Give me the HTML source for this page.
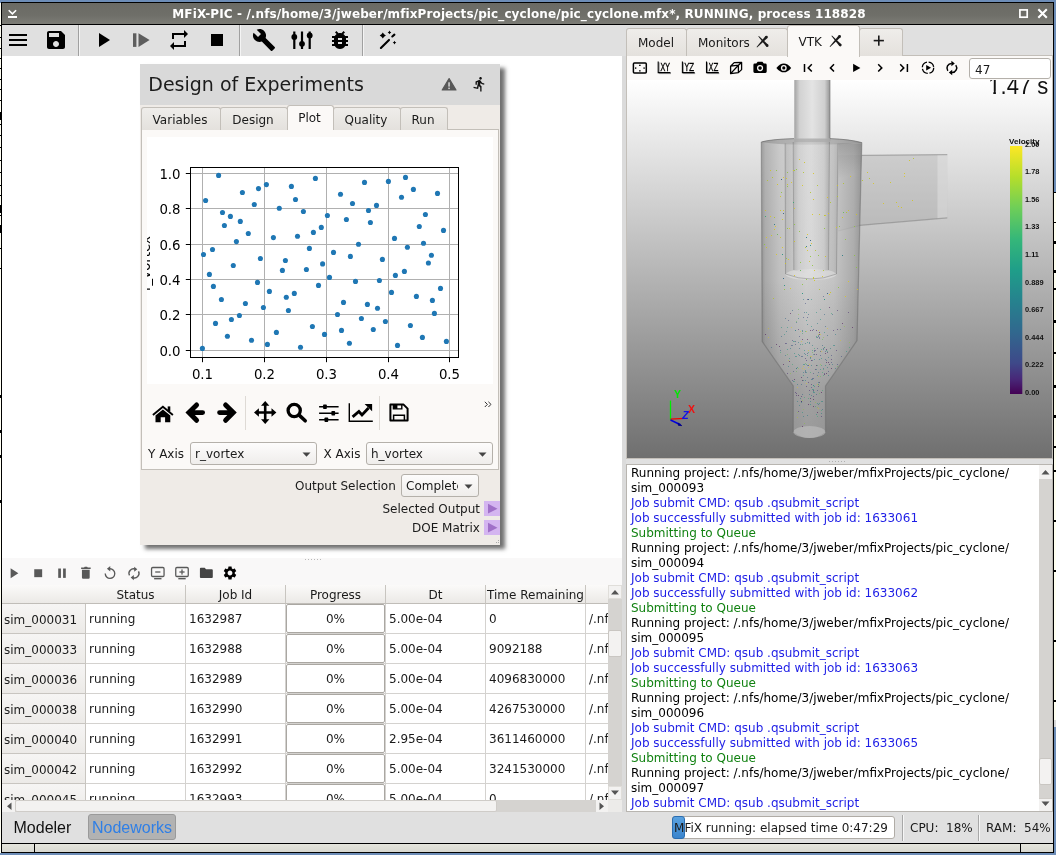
<!DOCTYPE html>
<html><head><meta charset="utf-8"><title>MFiX-PIC</title>
<style>
html,body{margin:0;padding:0;}
body{width:1056px;height:855px;overflow:hidden;background:#6d8db7;position:relative;
 font-family:"DejaVu Sans","Liberation Sans",sans-serif;font-size:12px;color:#1a1a1a;}
.a{position:absolute;}
.t{position:absolute;white-space:nowrap;line-height:1;}
svg{position:absolute;overflow:visible;}
#win{position:absolute;left:1px;top:2px;width:1053px;height:851px;background:#000;}
#in{position:absolute;left:1px;top:1px;width:1051px;height:849px;background:#e0e0e0;overflow:hidden;}
/* coordinates inside #in are page coords minus (2,3) ; use wrapper shifted */
#pg{position:absolute;left:-2px;top:-3px;width:1056px;height:855px;will-change:transform;}
.tab{position:absolute;box-sizing:border-box;border:1px solid #c3bfb9;border-bottom:none;border-radius:3px 3px 0 0;
 background:linear-gradient(#efedea,#e4e1dd);text-align:center;font-size:13px;}
.tab.sel{background:#fbf9f7;}
.hdr{position:absolute;box-sizing:border-box;top:585px;height:19px;background:linear-gradient(#fbfaf9,#ebe9e6);
 border-right:1px solid #c8c5c0;border-bottom:1px solid #c0bdb8;text-align:center;font-size:12px;line-height:20px;}
.rh{position:absolute;box-sizing:border-box;left:2px;width:84px;height:30px;background:linear-gradient(#f6f5f4,#eceae7);
 border-right:1px solid #c8c5c0;border-bottom:1px solid #c8c5c0;font-size:12px;line-height:33px;padding-left:2px;}
.cell{position:absolute;box-sizing:border-box;height:30px;background:#fff;border-right:1px solid #d4d2cf;border-bottom:1px solid #d4d2cf;
 font-size:12px;line-height:31px;padding-left:3px;white-space:nowrap;overflow:hidden;}
.pb{position:absolute;box-sizing:border-box;height:29px;background:#fff;border:1px solid #aaa7a2;border-radius:2px;text-align:center;font-size:12px;line-height:28px;}
.cl{position:absolute;left:631px;white-space:nowrap;font-size:12px;line-height:15px;height:15px;}
.k{color:#000;} .b{color:#1e1ee6;} .g{color:#128212;}
.combo{position:absolute;box-sizing:border-box;border:1px solid #b4b0aa;border-radius:3px;background:linear-gradient(#fdfcfc,#efedeb);font-size:13px;}
</style></head><body>
<!-- background slivers of windows behind -->
<div class="a" style="left:0;top:3px;width:1px;height:850px;background:#fffff4;"></div>
<div class="a" style="left:1054px;top:192px;width:2px;height:528px;background:#fffff0;"></div><div class="a" style="left:1054px;top:720px;width:2px;height:7px;background:#d8d8d8;"></div>
<div class="a" style="left:0;top:25px;width:1px;height:1px;background:#000;"></div><div class="a" style="left:0;top:37px;width:1px;height:1px;background:#000;"></div><div class="a" style="left:0;top:48px;width:1px;height:1px;background:#000;"></div><div class="a" style="left:0;top:58px;width:1px;height:1px;background:#000;"></div><div class="a" style="left:0;top:68px;width:1px;height:1px;background:#000;"></div><div class="a" style="left:0;top:79px;width:1px;height:1px;background:#000;"></div><div class="a" style="left:0;top:89px;width:1px;height:1px;background:#000;"></div><div class="a" style="left:0;top:100px;width:1px;height:1px;background:#000;"></div><div class="a" style="left:0;top:112px;width:1px;height:1px;background:#000;"></div><div class="a" style="left:0;top:124px;width:1px;height:1px;background:#000;"></div><div class="a" style="left:0;top:135px;width:1px;height:1px;background:#000;"></div><div class="a" style="left:0;top:147px;width:1px;height:1px;background:#000;"></div><div class="a" style="left:0;top:160px;width:1px;height:1px;background:#000;"></div><div class="a" style="left:0;top:172px;width:1px;height:1px;background:#000;"></div><div class="a" style="left:0;top:185px;width:1px;height:1px;background:#000;"></div><div class="a" style="left:0;top:195px;width:1px;height:1px;background:#000;"></div><div class="a" style="left:0;top:208px;width:1px;height:1px;background:#000;"></div><div class="a" style="left:0;top:215px;width:1px;height:1px;background:#000;"></div><div class="a" style="left:0;top:226px;width:1px;height:1px;background:#000;"></div><div class="a" style="left:0;top:248px;width:1px;height:1px;background:#000;"></div><div class="a" style="left:0;top:268px;width:1px;height:1px;background:#000;"></div><div class="a" style="left:0;top:112px;width:1px;height:8px;background:#000;"></div><div class="a" style="left:0;top:205px;width:1px;height:8px;background:#000;"></div><div class="a" style="left:0;top:225px;width:1px;height:8px;background:#000;"></div><div class="a" style="left:0;top:395px;width:1px;height:3px;background:#000;"></div><div class="a" style="left:0;top:430px;width:1px;height:3px;background:#000;"></div><div class="a" style="left:0;top:455px;width:1px;height:3px;background:#000;"></div><div class="a" style="left:0;top:500px;width:1px;height:3px;background:#000;"></div><div class="a" style="left:1054px;top:192px;width:2px;height:1px;background:#000;"></div><div class="a" style="left:1054px;top:222px;width:2px;height:1px;background:#000;"></div><div class="a" style="left:1054px;top:241px;width:2px;height:3px;background:#000;"></div><div class="a" style="left:1054px;top:270px;width:2px;height:3px;background:#000;"></div><div class="a" style="left:1054px;top:288px;width:2px;height:2px;background:#000;"></div><div class="a" style="left:1054px;top:320px;width:2px;height:3px;background:#000;"></div><div class="a" style="left:1054px;top:352px;width:2px;height:2px;background:#000;"></div><div class="a" style="left:1054px;top:385px;width:2px;height:3px;background:#000;"></div><div class="a" style="left:1054px;top:415px;width:2px;height:3px;background:#000;"></div><div class="a" style="left:1054px;top:446px;width:2px;height:2px;background:#000;"></div><div class="a" style="left:1054px;top:470px;width:2px;height:2px;background:#000;"></div><div class="a" style="left:1054px;top:520px;width:2px;height:2px;background:#000;"></div><div class="a" style="left:1054px;top:570px;width:2px;height:2px;background:#000;"></div><div class="a" style="left:1054px;top:640px;width:2px;height:2px;background:#000;"></div><div class="a" style="left:1054px;top:700px;width:2px;height:2px;background:#000;"></div><div id="win"><div id="in"><div id="pg"><div class="a" style="left:2px;top:3px;width:1051px;height:21px;background:linear-gradient(#6a6a64,#6f6f69 60%,#7c7c76);"></div>
<div class="a" style="left:2px;top:24px;width:1051px;height:1px;background:#000;"></div>
<div class="t" style="left:2px;width:1034px;top:8px;text-align:center;color:#fff;font-weight:bold;font-size:12px;letter-spacing:0.105px;">MFiX-PIC - /.nfs/home/3/jweber/mfixProjects/pic_cyclone/pic_cyclone.mfx*, RUNNING, process 118828</div>
<svg style="left:0;top:0" width="1056" height="30" viewBox="0 0 1056 30">
 <path d="M8.7 10.2 L12.4 13.9 L16.1 10.2" fill="none" stroke="#fff" stroke-width="1.6"/>
 <rect x="8" y="16" width="9" height="2" fill="#fff"/>
 <rect x="1019.9" y="9.9" width="7.3" height="7.3" fill="none" stroke="#fff" stroke-width="1.7"/>
 <path d="M1038.3 9.3 L1046.8 17.7 M1046.8 9.3 L1038.3 17.7" stroke="#fff" stroke-width="2.1" fill="none"/>
</svg>
<div class="a" style="left:2px;top:25px;width:1051px;height:31px;background:#e0e0e0;"></div>
<div class="a" style="left:78px;top:25px;width:1px;height:31px;background:#a0a0a0;"></div><div class="a" style="left:79px;top:25px;width:1px;height:31px;background:#f4f4f4;"></div>
<div class="a" style="left:239px;top:25px;width:1px;height:31px;background:#a0a0a0;"></div><div class="a" style="left:240px;top:25px;width:1px;height:31px;background:#f4f4f4;"></div>
<div class="a" style="left:362px;top:25px;width:1px;height:31px;background:#a0a0a0;"></div><div class="a" style="left:363px;top:25px;width:1px;height:31px;background:#f4f4f4;"></div>
<svg style="left:6px;top:28px" width="24" height="24" viewBox="0 0 24 24"><path d="M3 18h18v-2H3v2zm0-5h18v-2H3v2zm0-7v2h18V6H3z" fill="#000" /></svg><svg style="left:44px;top:28px" width="24" height="24" viewBox="0 0 24 24"><path d="M17 3H5c-1.11 0-2 .9-2 2v14c0 1.1.89 2 2 2h14c1.1 0 2-.9 2-2V7l-4-4zm-5 16c-1.66 0-3-1.34-3-3s1.34-3 3-3 3 1.34 3 3-1.34 3-3 3zm3-10H5V5h10v4z" fill="#000" /></svg><svg style="left:91px;top:28px" width="24" height="24" viewBox="0 0 24 24"><path d="M8 5v14l11-7z" fill="#000" /></svg><svg style="left:0;top:0" width="300" height="60"><rect x="133" y="33.3" width="3.4" height="13.6" fill="#5e5e5e"/><path d="M138.5 33.3 L149.6 40.1 L138.5 46.9Z" fill="#5e5e5e"/></svg><svg style="left:167px;top:28px" width="24" height="24" viewBox="0 0 24 24"><path d="M7 7h10v3l4-4-4-4v3H5v6h2V7zm10 10H7v-3l-4 4 4 4v-3h12v-6h-2v4z" fill="#000" /></svg><svg style="left:205px;top:28px" width="24" height="24" viewBox="0 0 24 24"><path d="M6 6h12v12H6z" fill="#000" /></svg><svg style="left:252px;top:28px" width="24" height="24" viewBox="0 0 24 24"><path d="M22.7 19l-9.1-9.1c.9-2.3.4-5-1.5-6.9-2-2-5-2.4-7.4-1.3L9 6 6 9 1.6 4.7C.4 7.1.9 10.1 2.9 12.1c1.9 1.9 4.6 2.4 6.9 1.5l9.1 9.1c.4.4 1 .4 1.4 0l2.3-2.3c.5-.4.5-1.1.1-1.4z" fill="#000" /></svg><svg style="left:0;top:0" width="400" height="60"><g stroke="#000" stroke-width="2.2" fill="none">
<path d="M294.3 31.5V49 M302 31.5V49 M309.7 31.5V49"/></g>
<circle cx="294.3" cy="37" r="2.9" fill="#000"/><circle cx="302" cy="43.8" r="2.9" fill="#000"/><circle cx="309.7" cy="35.4" r="2.9" fill="#000"/></svg><svg style="left:328px;top:28px" width="24" height="24" viewBox="0 0 24 24"><path d="M20 8h-2.81c-.45-.78-1.07-1.45-1.82-1.96L17 4.41 15.59 3l-2.17 2.17C12.96 5.06 12.49 5 12 5c-.49 0-.96.06-1.41.17L8.41 3 7 4.41l1.62 1.63C7.88 6.55 7.26 7.22 6.81 8H4v2h2.09c-.05.33-.09.66-.09 1v1H4v2h2v1c0 .34.04.67.09 1H4v2h2.81c1.04 1.79 2.97 3 5.19 3s4.15-1.21 5.19-3H20v-2h-2.09c.05-.33.09-.66.09-1v-1h2v-2h-2v-1c0-.34-.04-.67-.09-1H20V8zm-6 8h-4v-2h4v2zm0-4h-4v-2h4v2z" fill="#000" /></svg><svg style="left:0;top:0" width="420" height="60"><path d="M380.900 48 L389 39.900 M392.300 36.500 L394.400 34.600" stroke="#000" stroke-width="2.100" stroke-linecap="round" fill="none"/><path d="M382.8 32.4 Q383.885 34.415 385.9 35.5 Q383.885 36.585 382.8 38.6 Q381.715 36.585 379.7 35.5 Q381.715 34.415 382.8 32.4Z M389.5 30.6 Q389.95 31.95 391.3 32.4 Q389.95 32.85 389.5 34.2 Q389.05 32.85 387.7 32.4 Q389.05 31.95 389.5 30.6Z M394.5 40.8 Q394.95 42.15 396.3 42.6 Q394.95 43.05 394.5 44.4 Q394.05 43.05 392.7 42.6 Q394.05 42.15 394.5 40.8Z" fill="#000"/></svg><div class="a" style="left:2px;top:56px;width:620px;height:502px;background:#fff;"></div><div class="a" style="left:2px;top:558px;width:620px;height:254px;background:#f9f8f8;"></div><div class="a" style="left:622px;top:56px;width:4px;height:756px;background:#dbdbdb;"></div><div class="a" style="left:140px;top:64px;width:360px;height:481px;background:#efebe7;box-shadow:5px 4px 4px 0 rgba(40,40,40,.66);"></div>
<div class="a" style="left:140px;top:64px;width:360px;height:41px;background:#d9d9d9;"></div>
<div class="t" style="left:148.300px;top:75px;font-size:19px;color:#1c1c1c;">Design of Experiments</div>
<svg style="left:0;top:0" width="520" height="120">
 <path d="M449.100 78.600 L456 90 H442.200 Z" fill="#585858" stroke="#585858" stroke-width="1.200" stroke-linejoin="round"/>
 <rect x="448.3" y="82.3" width="1.5" height="4.3" fill="#d9d9d9"/><rect x="448.3" y="87.6" width="1.5" height="1.5" fill="#d9d9d9"/>
 <g transform="translate(471.5,76) scale(0.67)"><path d="M13.49 5.48c1.1 0 2-.9 2-2s-.9-2-2-2-2 .9-2 2 .9 2 2 2zm-3.6 13.9l1-4.4 2.1 2v6h2v-7.5l-2.1-2 .6-3c1.3 1.5 3.3 2.5 5.5 2.5v-2c-1.9 0-3.5-1-4.3-2.400l-1-1.6c-.4-.6-1-1-1.700-1-.3 0-.5.1-.8.1l-5.200 2.200v4.700h2v-3.400l1.800-.7-1.600 8.100-4.900-1-.4 2 7 1.400z" fill="#111"/></g>
</svg>
<div class="a" style="left:141px;top:129px;width:358px;height:341px;box-sizing:border-box;border:1px solid #c3bfb9;background:#fbf9f7;"></div><div class="tab" style="left:141px;top:107px;width:80px;height:23px;line-height:24px;font-size:12px;text-indent:-2px;">Variables</div><div class="tab" style="left:220px;top:107px;width:68px;height:23px;line-height:24px;font-size:12px;text-indent:-2px;">Design</div><div class="tab" style="left:333px;top:107px;width:68px;height:23px;line-height:24px;font-size:12px;text-indent:-2px;">Quality</div><div class="tab" style="left:400px;top:107px;width:48px;height:23px;line-height:24px;font-size:12px;text-indent:-2px;">Run</div><div class="tab sel" style="left:287px;top:105px;width:47px;height:25px;line-height:25px;font-size:12px;text-indent:-2px;">Plot</div><div class="a" style="left:147px;top:137px;width:346px;height:247px;background:#fff;overflow:hidden;"><svg style="left:-147px;top:-137px" width="520" height="420" font-family="DejaVu Sans, sans-serif" font-size="13.33px" fill="#000"><path d="M202.5 167.5V357.5" stroke="#b0b0b0" stroke-width="1"/><path d="M202.5 357.5v4.7" stroke="#000" stroke-width="1"/><path d="M264.5 167.5V357.5" stroke="#b0b0b0" stroke-width="1"/><path d="M264.5 357.5v4.7" stroke="#000" stroke-width="1"/><path d="M326.5 167.5V357.5" stroke="#b0b0b0" stroke-width="1"/><path d="M326.5 357.5v4.7" stroke="#000" stroke-width="1"/><path d="M388.5 167.5V357.5" stroke="#b0b0b0" stroke-width="1"/><path d="M388.5 357.5v4.7" stroke="#000" stroke-width="1"/><path d="M449.5 167.5V357.5" stroke="#b0b0b0" stroke-width="1"/><path d="M449.5 357.5v4.7" stroke="#000" stroke-width="1"/><path d="M190.5 350.5H458.5" stroke="#b0b0b0" stroke-width="1"/><path d="M190.5 350.5h-4.7" stroke="#000" stroke-width="1"/><path d="M190.5 314.5H458.5" stroke="#b0b0b0" stroke-width="1"/><path d="M190.5 314.5h-4.7" stroke="#000" stroke-width="1"/><path d="M190.5 279.5H458.5" stroke="#b0b0b0" stroke-width="1"/><path d="M190.5 279.5h-4.7" stroke="#000" stroke-width="1"/><path d="M190.5 244.5H458.5" stroke="#b0b0b0" stroke-width="1"/><path d="M190.5 244.5h-4.7" stroke="#000" stroke-width="1"/><path d="M190.5 208.5H458.5" stroke="#b0b0b0" stroke-width="1"/><path d="M190.5 208.5h-4.7" stroke="#000" stroke-width="1"/><path d="M190.5 173.5H458.5" stroke="#b0b0b0" stroke-width="1"/><path d="M190.5 173.5h-4.7" stroke="#000" stroke-width="1"/><circle cx="218.6" cy="175.4" r="2.55" fill="#1f77b4"/><circle cx="205.6" cy="200.5" r="2.55" fill="#1f77b4"/><circle cx="242.4" cy="192.5" r="2.55" fill="#1f77b4"/><circle cx="258.5" cy="188.6" r="2.55" fill="#1f77b4"/><circle cx="266.4" cy="184.6" r="2.55" fill="#1f77b4"/><circle cx="254.3" cy="204.5" r="2.55" fill="#1f77b4"/><circle cx="291.4" cy="186.4" r="2.55" fill="#1f77b4"/><circle cx="315.4" cy="178.4" r="2.55" fill="#1f77b4"/><circle cx="295.5" cy="199.5" r="2.55" fill="#1f77b4"/><circle cx="279.3" cy="208.3" r="2.55" fill="#1f77b4"/><circle cx="303.4" cy="211.5" r="2.55" fill="#1f77b4"/><circle cx="327.4" cy="215.5" r="2.55" fill="#1f77b4"/><circle cx="222.5" cy="212.5" r="2.55" fill="#1f77b4"/><circle cx="230.4" cy="216.4" r="2.55" fill="#1f77b4"/><circle cx="240.3" cy="221.4" r="2.55" fill="#1f77b4"/><circle cx="224.4" cy="225.5" r="2.55" fill="#1f77b4"/><circle cx="248.3" cy="233.5" r="2.55" fill="#1f77b4"/><circle cx="236.4" cy="241.6" r="2.55" fill="#1f77b4"/><circle cx="273.4" cy="237.6" r="2.55" fill="#1f77b4"/><circle cx="297.5" cy="236.3" r="2.55" fill="#1f77b4"/><circle cx="313.4" cy="232.4" r="2.55" fill="#1f77b4"/><circle cx="321.3" cy="227.4" r="2.55" fill="#1f77b4"/><circle cx="212.5" cy="249.5" r="2.55" fill="#1f77b4"/><circle cx="203.5" cy="254.5" r="2.55" fill="#1f77b4"/><circle cx="309.4" cy="248.4" r="2.55" fill="#1f77b4"/><circle cx="260.4" cy="258.5" r="2.55" fill="#1f77b4"/><circle cx="285.4" cy="260.5" r="2.55" fill="#1f77b4"/><circle cx="322.6" cy="263.9" r="2.55" fill="#1f77b4"/><circle cx="233.3" cy="265.5" r="2.55" fill="#1f77b4"/><circle cx="364.5" cy="182.4" r="2.55" fill="#1f77b4"/><circle cx="388.4" cy="181.4" r="2.55" fill="#1f77b4"/><circle cx="405.5" cy="177.4" r="2.55" fill="#1f77b4"/><circle cx="413.4" cy="189.4" r="2.55" fill="#1f77b4"/><circle cx="437.5" cy="193.4" r="2.55" fill="#1f77b4"/><circle cx="401.5" cy="197.3" r="2.55" fill="#1f77b4"/><circle cx="340.5" cy="194.3" r="2.55" fill="#1f77b4"/><circle cx="352.5" cy="203.5" r="2.55" fill="#1f77b4"/><circle cx="376.5" cy="205.4" r="2.55" fill="#1f77b4"/><circle cx="368.5" cy="210.5" r="2.55" fill="#1f77b4"/><circle cx="346.4" cy="219.5" r="2.55" fill="#1f77b4"/><circle cx="370.4" cy="222.5" r="2.55" fill="#1f77b4"/><circle cx="425.4" cy="214.5" r="2.55" fill="#1f77b4"/><circle cx="419.3" cy="226.5" r="2.55" fill="#1f77b4"/><circle cx="443.5" cy="230.4" r="2.55" fill="#1f77b4"/><circle cx="394.5" cy="238.4" r="2.55" fill="#1f77b4"/><circle cx="358.5" cy="244.3" r="2.55" fill="#1f77b4"/><circle cx="423.5" cy="243.3" r="2.55" fill="#1f77b4"/><circle cx="407.4" cy="247.3" r="2.55" fill="#1f77b4"/><circle cx="333.5" cy="252.4" r="2.55" fill="#1f77b4"/><circle cx="350.4" cy="256.4" r="2.55" fill="#1f77b4"/><circle cx="382.4" cy="259.4" r="2.55" fill="#1f77b4"/><circle cx="431.4" cy="255.3" r="2.55" fill="#1f77b4"/><circle cx="428.4" cy="263.0" r="2.55" fill="#1f77b4"/><circle cx="209.4" cy="274.4" r="2.55" fill="#1f77b4"/><circle cx="282.4" cy="270.4" r="2.55" fill="#1f77b4"/><circle cx="306.4" cy="269.5" r="2.55" fill="#1f77b4"/><circle cx="329.5" cy="277.4" r="2.55" fill="#1f77b4"/><circle cx="213.4" cy="286.4" r="2.55" fill="#1f77b4"/><circle cx="257.5" cy="282.4" r="2.55" fill="#1f77b4"/><circle cx="318.5" cy="285.4" r="2.55" fill="#1f77b4"/><circle cx="269.4" cy="291.4" r="2.55" fill="#1f77b4"/><circle cx="294.3" cy="293.4" r="2.55" fill="#1f77b4"/><circle cx="286.3" cy="297.3" r="2.55" fill="#1f77b4"/><circle cx="221.4" cy="299.5" r="2.55" fill="#1f77b4"/><circle cx="245.4" cy="303.5" r="2.55" fill="#1f77b4"/><circle cx="263.4" cy="307.5" r="2.55" fill="#1f77b4"/><circle cx="288.4" cy="310.5" r="2.55" fill="#1f77b4"/><circle cx="239.4" cy="315.5" r="2.55" fill="#1f77b4"/><circle cx="231.4" cy="319.5" r="2.55" fill="#1f77b4"/><circle cx="215.5" cy="323.4" r="2.55" fill="#1f77b4"/><circle cx="312.4" cy="326.5" r="2.55" fill="#1f77b4"/><circle cx="276.4" cy="332.4" r="2.55" fill="#1f77b4"/><circle cx="324.5" cy="334.4" r="2.55" fill="#1f77b4"/><circle cx="227.4" cy="336.3" r="2.55" fill="#1f77b4"/><circle cx="251.5" cy="340.3" r="2.55" fill="#1f77b4"/><circle cx="267.4" cy="344.4" r="2.55" fill="#1f77b4"/><circle cx="300.5" cy="347.3" r="2.55" fill="#1f77b4"/><circle cx="202.4" cy="348.4" r="2.55" fill="#1f77b4"/><circle cx="395.4" cy="275.4" r="2.55" fill="#1f77b4"/><circle cx="404.4" cy="271.4" r="2.55" fill="#1f77b4"/><circle cx="355.5" cy="281.4" r="2.55" fill="#1f77b4"/><circle cx="379.4" cy="280.5" r="2.55" fill="#1f77b4"/><circle cx="440.5" cy="288.4" r="2.55" fill="#1f77b4"/><circle cx="391.5" cy="292.4" r="2.55" fill="#1f77b4"/><circle cx="416.4" cy="296.4" r="2.55" fill="#1f77b4"/><circle cx="432.4" cy="300.4" r="2.55" fill="#1f77b4"/><circle cx="343.5" cy="302.4" r="2.55" fill="#1f77b4"/><circle cx="367.4" cy="304.4" r="2.55" fill="#1f77b4"/><circle cx="377.5" cy="308.3" r="2.55" fill="#1f77b4"/><circle cx="434.4" cy="313.4" r="2.55" fill="#1f77b4"/><circle cx="337.5" cy="314.5" r="2.55" fill="#1f77b4"/><circle cx="361.4" cy="318.5" r="2.55" fill="#1f77b4"/><circle cx="385.4" cy="321.5" r="2.55" fill="#1f77b4"/><circle cx="410.4" cy="325.5" r="2.55" fill="#1f77b4"/><circle cx="341.5" cy="330.4" r="2.55" fill="#1f77b4"/><circle cx="373.3" cy="329.5" r="2.55" fill="#1f77b4"/><circle cx="422.4" cy="337.4" r="2.55" fill="#1f77b4"/><circle cx="349.4" cy="343.3" r="2.55" fill="#1f77b4"/><circle cx="446.4" cy="341.4" r="2.55" fill="#1f77b4"/><circle cx="397.5" cy="345.4" r="2.55" fill="#1f77b4"/><rect x="190.5" y="167.5" width="268" height="190" fill="none" stroke="#000" stroke-width="1"/><text x="202.5" y="378.6" text-anchor="middle">0.1</text><text x="264.5" y="378.6" text-anchor="middle">0.2</text><text x="326.5" y="378.6" text-anchor="middle">0.3</text><text x="388.5" y="378.6" text-anchor="middle">0.4</text><text x="449.5" y="378.6" text-anchor="middle">0.5</text><text x="180.600" y="355.5" text-anchor="end">0.0</text><text x="180.600" y="319.5" text-anchor="end">0.2</text><text x="180.600" y="284.5" text-anchor="end">0.4</text><text x="180.600" y="249.5" text-anchor="end">0.6</text><text x="180.600" y="213.5" text-anchor="end">0.8</text><text x="180.600" y="178.5" text-anchor="end">1.0</text><text transform="translate(149.500,263.500) rotate(-90)" text-anchor="middle">r_vortex</text></svg></div><svg style="left:0;top:0" width="520" height="440">
<g fill="#000" stroke="none">
 <!-- home -->
 <path d="M162.900 405.600 L173.500 414.300 L172.300 415.700 L162.900 408 L153.500 415.700 L152.300 414.300 Z"/>
 <path d="M162.900 409.400 L170.300 415.500 V422.300 H165.100 V417.200 H160.700 V422.300 H155.500 V415.500 Z"/>
 <rect x="167.700" y="406.400" width="2.600" height="5"/>
</g>
<g fill="none" stroke="#000" stroke-width="4.900" stroke-linecap="round" stroke-linejoin="miter">
 <!-- back -->
 <path d="M202.600 412.600 H190.500 M196.600 404.900 L188.900 412.600 L196.600 420.300"/>
 <!-- forward -->
 <path d="M219.600 412.600 H231.700 M225.600 404.900 L233.300 412.600 L225.600 420.300"/>
</g>
<g fill="#000">
 <!-- move -->
 <path d="M265.200 401 L269.400 405.800 H266.500 V411.200 H271.500 V408.300 L276.400 412.500 L271.500 416.700 V413.800 H266.500 V419.200 H269.400 L265.200 424 L261 419.200 H263.900 V413.800 H258.900 V416.700 L254 412.500 L258.900 408.300 V411.200 H263.900 V405.800 H261 Z"/>
</g>
 <!-- zoom -->
 <circle cx="294.200" cy="410.500" r="6.100" fill="none" stroke="#000" stroke-width="3.300"/>
 <path d="M299.400 415.400 L305.200 420.800" stroke="#000" stroke-width="3.600" stroke-linecap="round"/>
 <!-- subplots -->
 <g stroke="#000" stroke-width="1.600"><path d="M319.100 406.700H338.600 M319.100 413.300H338.600 M319.100 419.700H338.600"/></g>
 <rect x="323.100" y="404.500" width="3.700" height="4.400" rx="0.700" fill="#000"/><rect x="331.400" y="411.100" width="3.700" height="4.400" rx="0.700" fill="#000"/><rect x="324.500" y="417.500" width="3.700" height="4.400" rx="0.700" fill="#000"/>
 <!-- edit (chart) -->
 <path d="M349.300 403.200 V421.300 H372.800" fill="none" stroke="#000" stroke-width="1.400"/>
 <path d="M352.600 416.800 L358.900 411.500 L362 414.900 L368.500 408.100" fill="none" stroke="#000" stroke-width="2.900" stroke-linejoin="miter"/>
 <path d="M364.600 404.100 H372.100 V411.200 Z" fill="#000"/>
 <!-- save -->
 <path d="M390.400 404.600 H403.600 L407.600 408.600 V420.500 H390.400 Z" fill="none" stroke="#000" stroke-width="2" stroke-linejoin="round"/>
 <path d="M393.400 404.600 V408.900 H401.800 V404.600" fill="none" stroke="#000" stroke-width="1.400"/>
 <rect x="393" y="404" width="4.400" height="4.900" fill="#000"/>
 <path d="M393.600 420.500 V415.200 H404.400 V420.500" fill="none" stroke="#000" stroke-width="1.500"/>
 <!-- separators -->
 <path d="M245.500 396V430 M379.500 396V430" stroke="#dedad5" stroke-width="1"/>
 <path d="M484.800 401.800 l2.600 2.600 l-2.600 2.600 M488.400 401.800 l2.600 2.600 l-2.600 2.600" fill="none" stroke="#333" stroke-width="1"/>
</svg>
<div class="t" style="left:148px;top:448px;font-size:12px;">Y Axis</div><div class="combo" style="left:190px;top:442px;width:127px;height:23px;line-height:23px;font-size:12px;padding-left:4px;overflow:hidden;">r_vortex</div><svg style="left:302px;top:451.5px" width="10" height="6"><path d="M0.500 0.500 H8.500 L4.500 4.800Z" fill="#444"/></svg><div class="t" style="left:323.500px;top:448px;font-size:12px;">X Axis</div><div class="combo" style="left:366px;top:442px;width:127px;height:23px;line-height:23px;font-size:12px;padding-left:4px;overflow:hidden;">h_vortex</div><svg style="left:478px;top:451.5px" width="10" height="6"><path d="M0.500 0.500 H8.500 L4.500 4.800Z" fill="#444"/></svg><div class="t" style="left:295px;top:480px;font-size:12px;">Output Selection</div><div class="combo" style="left:401px;top:474px;width:78px;height:23px;line-height:23px;font-size:12px;padding-left:4px;overflow:hidden;"><span style="display:inline-block;width:52px;overflow:hidden;vertical-align:top;">Completed</span></div><svg style="left:464px;top:483.5px" width="10" height="6"><path d="M0.500 0.500 H8.500 L4.500 4.800Z" fill="#444"/></svg><div class="t" style="left:382.500px;top:503px;font-size:12px;">Selected Output</div><div class="t" style="left:412px;top:522px;font-size:12px;">DOE Matrix</div><div class="a" style="left:484px;top:501px;width:16px;height:15px;background:#d4b5f0;"></div><svg style="left:487px;top:503px" width="12" height="12"><path d="M1 0.800 L10.500 5.700 L1 10.600Z" fill="#a070c8"/></svg><div class="a" style="left:484px;top:520px;width:16px;height:15px;background:#d4b5f0;"></div><svg style="left:487px;top:522px" width="12" height="12"><path d="M1 0.800 L10.500 5.700 L1 10.600Z" fill="#a070c8"/></svg><svg style="left:490px;top:536px" width="10" height="10"><g fill="#aaa"><rect x="6" y="6" width="1" height="1"/><rect x="8" y="4" width="1" height="1"/><rect x="8" y="6" width="1" height="1"/></g></svg><svg style="left:305px;top:558px" width="20" height="4"><g fill="#b8b8b8"><rect x="0" y="1" width="1" height="1"/><rect x="3" y="1" width="1" height="1"/><rect x="6" y="1" width="1" height="1"/><rect x="9" y="1" width="1" height="1"/><rect x="12" y="1" width="1" height="1"/><rect x="15" y="1" width="1" height="1"/></g></svg><svg style="left:0;top:0" width="260" height="600"><g transform="translate(14.3,573.200) scale(0.900) translate(-14.3,-573.200)"><path d="M10.200 567.600 L18.800 573.200 L10.200 578.800Z" fill="#595959"/></g><g transform="translate(38.2,573.200) scale(0.900) translate(-38.2,-573.200)"><rect x="33.800" y="568.800" width="8.800" height="8.800" fill="#595959"/></g><g transform="translate(62,573.200) scale(0.900) translate(-62,-573.200)"><rect x="57.800" y="568" width="3" height="10.400" fill="#595959"/><rect x="63.200" y="568" width="3" height="10.400" fill="#595959"/></g><g transform="translate(85.9,573.200) scale(0.900) translate(-85.9,-573.200)"><path d="M81.500 569.500 h8.600 v8.600 q0 1.300 -1.300 1.300 h-6 q-1.300 0 -1.300 -1.300 Z M80.600 567 h3.200 l0.800 -0.900 h2.600 l0.800 0.900 h3.200 v1.600 h-10.600 Z" fill="#595959"/></g><g transform="translate(110,573.200) scale(0.900) translate(-110,-573.200)"><path d="M110 568.300 a5.300 5.300 0 1 1 -5.300 5.300" fill="none" stroke="#595959" stroke-width="1.500"/><path d="M110.300 565.300 L106.600 568.300 L110.300 571.300Z" fill="#595959"/></g><g transform="translate(134,573.200) scale(0.900) translate(-134,-573.200)"><g fill="none" stroke="#595959" stroke-width="1.500"><path d="M129 575.600 a5 5 0 0 1 6.600 -6.800"/><path d="M139 571.200 a5 5 0 0 1 -6.600 6.800"/></g><path d="M134.200 565.900 L137.700 568.800 L134.200 571.700Z" fill="#595959"/><path d="M133.800 575.100 L130.300 578 L133.800 580.900Z" fill="#595959"/></g><g transform="translate(157.8,573.200) scale(0.920) translate(-157.8,-573.200)"><rect x="151" y="567" width="13.600" height="9.800" rx="1.300" fill="none" stroke="#595959" stroke-width="1.400"/><rect x="153.8" y="578.400" width="8" height="1.500" fill="#595959"/><rect x="155" y="571.200" width="5.600" height="1.400" fill="#595959"/></g><g transform="translate(182,573.200) scale(0.920) translate(-182,-573.200)"><rect x="175.2" y="567" width="13.600" height="9.800" rx="1.300" fill="none" stroke="#595959" stroke-width="1.400"/><rect x="178" y="578.400" width="8" height="1.500" fill="#595959"/><rect x="179.2" y="571.200" width="5.600" height="1.400" fill="#595959"/><rect x="181.3" y="569.100" width="1.400" height="5.600" fill="#595959"/></g><g transform="translate(206.4,573.200) scale(0.900) translate(-206.4,-573.200)"><path d="M200.200 567.200 h4.300 l1.500 1.700 h6.500 q1 0 1 1 v7.600 q0 1 -1 1 h-12.300 q-1 0 -1 -1 v-9.300 q0 -1 1 -1Z" fill="#444"/></g></svg><svg style="left:221.500px;top:565px" width="16" height="16" viewBox="0 0 24 24"><path d="M19.140 12.940c.04-.3.060-.61.060-.94 0-.32-.02-.64-.07-.94l2.030-1.580c.18-.14.230-.41.120-.61l-1.920-3.320c-.12-.22-.37-.29-.59-.22l-2.390.96c-.5-.38-1.030-.7-1.620-.94l-.36-2.540c-.04-.24-.24-.41-.48-.41h-3.840c-.24 0-.43.170-.47.410l-.36 2.540c-.59.240-1.130.57-1.620.94l-2.390-.96c-.22-.08-.47 0-.59.220L2.740 8.870c-.12.210-.08.470.12.610l2.030 1.580c-.05.300-.09.630-.09.940s.02.640.07.940l-2.030 1.580c-.18.140-.23.410-.12.610l1.920 3.320c.12.220.37.290.59.220l2.390-.96c.5.380 1.030.7 1.620.94l.36 2.540c.05.240.24.410.48.410h3.840c.24 0 .44-.17.470-.41l.36-2.540c.59-.24 1.130-.56 1.620-.94l2.390.96c.22.080.47 0 .59-.22l1.920-3.320c.12-.22.070-.47-.12-.61l-2.010-1.580zM12 15.600c-1.980 0-3.600-1.620-3.600-3.600s1.620-3.600 3.600-3.600 3.600 1.620 3.600 3.600-1.620 3.600-3.600 3.600z" fill="#000"/></svg><div class="a" style="left:2px;top:585px;width:620px;height:227px;background:#fff;overflow:hidden;"></div><div class="a" style="left:2px;top:585px;width:606px;height:215px;overflow:hidden;"><div class="a" style="left:-2px;top:-585px;"><div class="hdr" style="left:2px;width:84px;border-right:none;"></div><div class="hdr" style="left:86px;width:100px;">Status</div><div class="hdr" style="left:186px;width:100px;">Job Id</div><div class="hdr" style="left:286px;width:100px;">Progress</div><div class="hdr" style="left:386px;width:100px;">Dt</div><div class="hdr" style="left:486px;width:100px;">Time Remaining</div><div class="hdr" style="left:586px;width:23px;border-right:none;"></div><div class="rh" style="top:604px;">sim_000031</div><div class="cell" style="left:86px;width:100px;top:604px;">running</div><div class="cell" style="left:186px;width:100px;top:604px;">1632987</div><div class="cell" style="left:286px;width:100px;top:604px;"></div><div class="pb" style="left:286px;width:99px;top:604px;">0%</div><div class="cell" style="left:386px;width:100px;top:604px;">5.00e-04</div><div class="cell" style="left:486px;width:100px;top:604px;">0</div><div class="cell" style="left:586px;width:40px;top:604px;border-right:none;">/.nfs</div><div class="rh" style="top:634px;">sim_000033</div><div class="cell" style="left:86px;width:100px;top:634px;">running</div><div class="cell" style="left:186px;width:100px;top:634px;">1632988</div><div class="cell" style="left:286px;width:100px;top:634px;"></div><div class="pb" style="left:286px;width:99px;top:634px;">0%</div><div class="cell" style="left:386px;width:100px;top:634px;">5.00e-04</div><div class="cell" style="left:486px;width:100px;top:634px;">9092188</div><div class="cell" style="left:586px;width:40px;top:634px;border-right:none;">/.nfs</div><div class="rh" style="top:664px;">sim_000036</div><div class="cell" style="left:86px;width:100px;top:664px;">running</div><div class="cell" style="left:186px;width:100px;top:664px;">1632989</div><div class="cell" style="left:286px;width:100px;top:664px;"></div><div class="pb" style="left:286px;width:99px;top:664px;">0%</div><div class="cell" style="left:386px;width:100px;top:664px;">5.00e-04</div><div class="cell" style="left:486px;width:100px;top:664px;">4096830000</div><div class="cell" style="left:586px;width:40px;top:664px;border-right:none;">/.nfs</div><div class="rh" style="top:694px;">sim_000038</div><div class="cell" style="left:86px;width:100px;top:694px;">running</div><div class="cell" style="left:186px;width:100px;top:694px;">1632990</div><div class="cell" style="left:286px;width:100px;top:694px;"></div><div class="pb" style="left:286px;width:99px;top:694px;">0%</div><div class="cell" style="left:386px;width:100px;top:694px;">5.00e-04</div><div class="cell" style="left:486px;width:100px;top:694px;">4267530000</div><div class="cell" style="left:586px;width:40px;top:694px;border-right:none;">/.nfs</div><div class="rh" style="top:724px;">sim_000040</div><div class="cell" style="left:86px;width:100px;top:724px;">running</div><div class="cell" style="left:186px;width:100px;top:724px;">1632991</div><div class="cell" style="left:286px;width:100px;top:724px;"></div><div class="pb" style="left:286px;width:99px;top:724px;">0%</div><div class="cell" style="left:386px;width:100px;top:724px;">2.95e-04</div><div class="cell" style="left:486px;width:100px;top:724px;">3611460000</div><div class="cell" style="left:586px;width:40px;top:724px;border-right:none;">/.nfs</div><div class="rh" style="top:754px;">sim_000042</div><div class="cell" style="left:86px;width:100px;top:754px;">running</div><div class="cell" style="left:186px;width:100px;top:754px;">1632992</div><div class="cell" style="left:286px;width:100px;top:754px;"></div><div class="pb" style="left:286px;width:99px;top:754px;">0%</div><div class="cell" style="left:386px;width:100px;top:754px;">5.00e-04</div><div class="cell" style="left:486px;width:100px;top:754px;">3241530000</div><div class="cell" style="left:586px;width:40px;top:754px;border-right:none;">/.nfs</div><div class="rh" style="top:784px;">sim_000045</div><div class="cell" style="left:86px;width:100px;top:784px;">running</div><div class="cell" style="left:186px;width:100px;top:784px;">1632993</div><div class="cell" style="left:286px;width:100px;top:784px;"></div><div class="pb" style="left:286px;width:99px;top:784px;">0%</div><div class="cell" style="left:386px;width:100px;top:784px;">5.00e-04</div><div class="cell" style="left:486px;width:100px;top:784px;">0</div><div class="cell" style="left:586px;width:40px;top:784px;border-right:none;">/.nfs</div></div></div><div class="a" style="left:608px;top:585px;width:14px;height:215px;background:#d5d3d0;"></div>
<div class="a" style="left:608px;top:585px;width:14px;height:14px;background:#f3f2f1;box-sizing:border-box;border:1px solid #e0deda;"></div>
<div class="a" style="left:608px;top:786px;width:14px;height:14px;background:#f3f2f1;box-sizing:border-box;border:1px solid #e0deda;"></div>
<div class="a" style="left:608px;top:630px;width:14px;height:27px;background:#f3f2f1;box-sizing:border-box;border:1px solid #c9c6c2;border-radius:2px;"></div>
<svg style="left:608px;top:585px" width="14" height="215"><path d="M3 9.500 L7 5 L11 9.500Z M3 205.500 L7 210 L11 205.500Z" fill="#555"/></svg>
<div class="a" style="left:2px;top:800px;width:606px;height:12px;background:#d5d3d0;"></div>
<div class="a" style="left:608px;top:800px;width:14px;height:12px;background:#ecebe9;"></div>
<div class="a" style="left:2px;top:800px;width:13px;height:12px;background:#f3f2f1;"></div>
<div class="a" style="left:596px;top:800px;width:12px;height:12px;background:#f3f2f1;"></div>
<div class="a" style="left:15px;top:800px;width:482px;height:12px;background:#f3f2f1;box-sizing:border-box;border:1px solid #cfccc8;border-radius:2px;"></div>
<svg style="left:2px;top:800px" width="606" height="12"><path d="M9.500 2.500 L5 6.200 L9.500 10Z M597.500 2.500 L602 6.200 L597.500 10Z" fill="#555"/></svg>
<div class="a" style="left:2px;top:812px;width:1051px;height:32px;background:#e0e0e0;"></div>
<div class="t" style="left:13.500px;top:820px;font-family:'Liberation Sans',sans-serif;font-size:16px;color:#111;">Modeler</div>
<div class="a" style="left:88px;top:814px;width:88px;height:26px;box-sizing:border-box;border:1px solid #9a9a9a;border-radius:3px;background:#b2b2b2;"></div>
<div class="t" style="left:92px;top:820px;font-family:'Liberation Sans',sans-serif;font-size:16px;color:#2f7fe6;">Nodeworks</div>
<div class="a" style="left:672px;top:816px;width:223px;height:23px;box-sizing:border-box;border:1px solid #b0aca6;border-radius:3px;background:#fff;"></div>
<div class="a" style="left:672px;top:816px;width:13px;height:23px;box-sizing:border-box;border:1px solid #2a6db0;border-radius:3px;background:linear-gradient(#5aa2e0,#3a84cc);"></div>
<div class="t" style="left:669.500px;width:223px;text-align:center;top:822px;font-size:12px;">MFiX running: elapsed time 0:47:29</div>
<div class="a" style="left:902px;top:815px;width:1px;height:26px;background:#a8a8a8;"></div><div class="a" style="left:903px;top:815px;width:1px;height:26px;background:#f6f6f6;"></div>
<div class="a" style="left:978px;top:815px;width:1px;height:26px;background:#a8a8a8;"></div><div class="a" style="left:979px;top:815px;width:1px;height:26px;background:#f6f6f6;"></div>
<div class="t" style="left:910px;top:822px;font-size:12px;white-space:pre;">CPU:  18%</div>
<div class="t" style="left:986px;top:822px;font-size:12px;white-space:pre;">RAM:  54%</div>
<div class="a" style="left:2px;top:843px;width:1051px;height:1px;background:#000;"></div>
<div class="a" style="left:2px;top:844px;width:1051px;height:8px;background:linear-gradient(#e4e4dc,#d8d8d0);"></div>
<div class="a" style="left:34px;top:844px;width:1px;height:8px;background:#000;"></div>
<div class="a" style="left:1020px;top:844px;width:1px;height:8px;background:#000;"></div>
<div class="a" style="left:626px;top:55px;width:427px;height:404px;box-sizing:border-box;border:1px solid #c3bfb9;background:#fbf9f7;"></div><div class="tab" style="left:626px;top:28px;width:61px;height:28px;"></div><div class="tab" style="left:686px;top:28px;width:102px;height:28px;"></div><div class="tab" style="left:859px;top:28px;width:44px;height:28px;"></div><div class="tab sel" style="left:787px;top:25px;width:73px;height:32px;"></div><div class="t" style="left:638px;top:37px;font-size:12px;">Model</div><div class="t" style="left:698px;top:37px;font-size:12px;">Monitors</div><div class="t" style="left:798.500px;top:36px;font-size:12px;">VTK</div><svg style="left:0;top:0" width="1056" height="60"><g fill="#1a1a1a"><path d="M758.34 36.54 L766.20 46.61 L768.20 44.79 L758.86 36.06Z"/><circle cx="767.20" cy="45.70" r="1.35"/><path d="M757.05 47.54 L767.48 37.93 L765.52 36.07 L756.55 47.06Z"/><circle cx="766.50" cy="37.00" r="1.35"/><path d="M831.44 35.94 L839.30 46.01 L841.30 44.19 L831.96 35.46Z"/><circle cx="840.30" cy="45.10" r="1.35"/><path d="M830.15 46.94 L840.58 37.33 L838.62 35.47 L829.65 46.46Z"/><circle cx="839.60" cy="36.40" r="1.35"/><rect x="873.700" y="39.800" width="10.200" height="1.600"/><rect x="878" y="35.500" width="1.600" height="10.200"/></g></svg><svg style="left:0;top:0" width="1056" height="82" font-family="DejaVu Sans, sans-serif"><rect x="633.400" y="63.100" width="12.900" height="9.900" rx="1" fill="none" stroke="#000" stroke-width="1.500"/><g fill="#000"><rect x="639.100" y="64.700" width="1.500" height="1.300"/><rect x="639.100" y="70.200" width="1.500" height="1.300"/><rect x="635.100" y="67.300" width="1.200" height="1.600"/><rect x="643.500" y="67.300" width="1.200" height="1.600"/></g><path d="M659.2 62.400 V73.600 H671" fill="none" stroke="#9a9a9a" stroke-width="1"/><path d="M658.2 61.400 V72.600 H670.5" fill="none" stroke="#000" stroke-width="1.100"/><text x="660.2" y="71.200" font-size="10.800" stroke="#000" stroke-width="0.300" fill="#000" textLength="9.800" lengthAdjust="spacingAndGlyphs">XY</text><path d="M683.4 62.400 V73.600 H695.2" fill="none" stroke="#9a9a9a" stroke-width="1"/><path d="M682.4 61.400 V72.600 H694.7" fill="none" stroke="#000" stroke-width="1.100"/><text x="684.4" y="71.200" font-size="10.800" stroke="#000" stroke-width="0.300" fill="#000" textLength="9.800" lengthAdjust="spacingAndGlyphs">YZ</text><path d="M707.5 62.400 V73.600 H719.3" fill="none" stroke="#9a9a9a" stroke-width="1"/><path d="M706.5 61.400 V72.600 H718.8" fill="none" stroke="#000" stroke-width="1.100"/><text x="708.5" y="71.200" font-size="10.800" stroke="#000" stroke-width="0.300" fill="#000" textLength="9.800" lengthAdjust="spacingAndGlyphs">XZ</text><g fill="none" stroke="#000" stroke-width="1.300" stroke-linejoin="round"><path d="M730.600 66.200 L738.400 65.200 V72.600 L730.600 73.600Z M730.600 66.200 L734.200 62.600 L741.600 62.400 L738.400 65.200 M741.600 62.400 V69.600 L738.400 72.600 M730.600 73.600 L738.400 65.200"/></g><path d="M756.300 63.600 l1.400 -1.800 h4.700 l1.400 1.800 h1.600 q1.300 0 1.300 1.300 v6.700 q0 1.300 -1.300 1.300 h-10.700 q-1.300 0 -1.300 -1.300 v-6.700 q0 -1.300 1.300 -1.300Z" fill="#000"/><circle cx="760.050" cy="68.100" r="3.100" fill="#fbf9f7"/><circle cx="760.050" cy="68.100" r="1.800" fill="#000"/><path d="M776.400 67.900 Q783.800 59 791.200 67.900 Q783.800 76.800 776.400 67.900Z" fill="#000"/><circle cx="783.800" cy="67.900" r="2.900" fill="#fbf9f7"/><circle cx="783.800" cy="67.900" r="1.600" fill="#000"/><g fill="none" stroke="#000" stroke-width="1.500"><path d="M804.500 63.900V71.900 M811.800 64.300 L808.200 67.900 L811.800 71.500"/><path d="M834 64.300 L830.400 67.900 L834 71.500"/><path d="M878.200 64.300 L881.800 67.900 L878.200 71.500"/><path d="M900.200 64.300 L903.800 67.900 L900.200 71.500 M907.400 63.900V71.900"/></g><path d="M853.100 63.700 L860.400 67.900 L853.100 72.100Z" fill="#000"/><circle cx="928" cy="67.700" r="5.700" fill="none" stroke="#000" stroke-width="1.300" stroke-dasharray="7.200 1.750"/><path d="M926.200 64.900 L931.100 67.700 L926.200 70.500Z" fill="#000"/><g fill="none" stroke="#000" stroke-width="1.500"><path d="M947.800 70.900 a4.700 4.700 0 0 1 4 -7.400"/><path d="M955.800 65.100 a4.700 4.700 0 0 1 -4 7.400"/></g><path d="M951.400 60.700 L954.800 63.500 L951.400 66.300Z M952.200 69.700 L948.800 72.500 L952.200 75.300Z" fill="#000"/></svg><div class="a" style="left:969px;top:58px;width:82px;height:21px;box-sizing:border-box;border:1px solid #b4b0aa;border-radius:3px;background:#fff;"></div><div class="t" style="left:975px;top:64px;font-size:12px;">47</div><div class="a" style="left:627px;top:80px;width:425px;height:378px;overflow:hidden;background:linear-gradient(#ffffff,#6f6f6f);"><svg style="left:-627px;top:-80px" width="1056" height="470" font-family="Liberation Sans, sans-serif"><defs>
<linearGradient id="cy" x1="0" x2="1" y1="0" y2="0"><stop offset="0" stop-color="#8a8a8a"/><stop offset="0.040" stop-color="#a6a6a6"/><stop offset="0.180" stop-color="#c2c2c2"/><stop offset="0.450" stop-color="#d6d6d6"/><stop offset="0.720" stop-color="#c8c8c8"/><stop offset="0.920" stop-color="#a8a8a8"/><stop offset="1" stop-color="#8a8a8a"/></linearGradient>
<linearGradient id="cy2" x1="0" x2="1" y1="0" y2="0"><stop offset="0" stop-color="#9c9c9c"/><stop offset="0.150" stop-color="#cfcfcf"/><stop offset="0.500" stop-color="#e2e2e2"/><stop offset="0.850" stop-color="#cccccc"/><stop offset="1" stop-color="#8e8e8e"/></linearGradient>
<linearGradient id="vir" x1="0" x2="0" y1="0" y2="1"><stop offset="0" stop-color="#fde725"/><stop offset="0.125" stop-color="#b5de2b"/><stop offset="0.250" stop-color="#6ece58"/><stop offset="0.375" stop-color="#35b779"/><stop offset="0.500" stop-color="#1f9e89"/><stop offset="0.625" stop-color="#26828e"/><stop offset="0.750" stop-color="#31688e"/><stop offset="0.875" stop-color="#3e4989"/><stop offset="0.940" stop-color="#482878"/><stop offset="1" stop-color="#440154"/></linearGradient>
<linearGradient id="shd" x1="0" x2="0.300" y1="0" y2="1"><stop offset="0" stop-color="#505050" stop-opacity="0.300"/><stop offset="0.450" stop-color="#505050" stop-opacity="0.160"/><stop offset="1" stop-color="#505050" stop-opacity="0"/></linearGradient>
<linearGradient id="vd" gradientUnits="userSpaceOnUse" x1="0" x2="0" y1="280" y2="440"><stop offset="0" stop-color="#3c3c3c" stop-opacity="0"/><stop offset="0.400" stop-color="#3c3c3c" stop-opacity="0.110"/><stop offset="0.700" stop-color="#3c3c3c" stop-opacity="0.260"/><stop offset="1" stop-color="#3c3c3c" stop-opacity="0.300"/></linearGradient>
</defs><path d="M838 155.200 L947.300 154.600 L947.300 217.800 L860 225.300 L838 231Z" fill="#a0a0a0" fill-opacity="0.330"/><path d="M937.500 154.700 H947.300 V217.800 L937.500 218.700Z" fill="#f0f0f0" fill-opacity="0.350"/><path d="M861.800 155.300 L947.300 154.700" stroke="#6e6e6e" stroke-width="1" opacity="0.550"/><path d="M947.300 217.800 L860 225.300 L838 231" stroke="#707070" stroke-width="1.200" fill="none" opacity="0.450"/><rect x="794.300" y="78" width="35.700" height="64" fill="url(#cy2)" opacity="0.930"/><path d="M830 78 V141" stroke="#707070" stroke-width="1" opacity="0.600"/><path d="M761.300 142 Q770 139.300 794 138.600 H830 Q850 139.300 861.800 142.600 L857 340.500 L825.500 386 L825.500 432 Q809.500 444 793.300 432 L793.300 386 L762.200 341.500Z" fill="url(#cy)" fill-opacity="0.800"/><path d="M762 280 H858.500 L857 340.500 L825.500 386 L825.500 432 Q809.500 444 793.300 432 L793.300 386 L762.200 341.500Z" fill="url(#vd)"/><path d="M761.300 142 Q770 139.300 794 138.600 H830 Q850 139.300 861.800 142.600 Q850 144.500 811 144.800 Q772 144.500 761.300 142Z" fill="#6a6a6a" fill-opacity="0.300"/><rect x="838.500" y="143.500" width="23.300" height="34" fill="url(#shd)"/><ellipse cx="809.400" cy="432" rx="16" ry="6" fill="#cfcfcf" fill-opacity="0.450"/><path d="M785.100 143.500 H838 L836.500 274 Q811 284 785.500 274Z" fill="url(#cy)" fill-opacity="0.300"/><ellipse cx="811" cy="274.500" rx="25.500" ry="5.500" fill="#ececec" fill-opacity="0.450"/><path d="M785.100 143.500 L785.500 274 Q811 284 836.500 274 L838 143.500" fill="none" stroke="#6c6c6c" stroke-width="1" opacity="0.400"/><path d="M793.200 142 H829.500 L828.500 270 Q811 277 793.800 270Z" fill="url(#cy2)" fill-opacity="0.400"/><path d="M793.200 142 L793.800 270 M829.500 142 L828.500 270" fill="none" stroke="#6c6c6c" stroke-width="1" opacity="0.380"/><path d="M761.300 142 L762.200 341.500 L793.300 386 V432 M861.800 142.600 L857 340.500 L825.500 386 V432" fill="none" stroke="#5e5e5e" stroke-width="1.200" opacity="0.420"/><path d="M761.300 142 Q770 139.300 794 138.600 M830 138.600 Q850 139.300 861.800 142.600" fill="none" stroke="#5a5a5a" stroke-width="1" opacity="0.550"/><rect x="806" y="237" width="1" height="1" fill="#22757f" opacity="0.85"/><rect x="806" y="279" width="1" height="1" fill="#8cc43a" opacity="0.85"/><rect x="823" y="270" width="1" height="1" fill="#b0c428" opacity="0.85"/><rect x="777" y="234" width="1" height="1" fill="#62b850" opacity="0.85"/><rect x="819" y="214" width="1" height="1" fill="#cfc51a" opacity="0.85"/><rect x="822" y="276" width="1" height="1" fill="#d9c81e" opacity="0.85"/><rect x="781" y="192" width="1" height="1" fill="#8cc43a" opacity="0.85"/><rect x="794" y="241" width="1" height="1" fill="#cfc51a" opacity="0.85"/><rect x="824" y="228" width="1" height="1" fill="#8cc43a" opacity="0.85"/><rect x="825" y="215" width="1" height="1" fill="#d9c81e" opacity="0.85"/><rect x="830" y="202" width="1" height="1" fill="#b0c428" opacity="0.85"/><rect x="766" y="237" width="1" height="1" fill="#d9c81e" opacity="0.85"/><rect x="843" y="212" width="1" height="1" fill="#62b850" opacity="0.85"/><rect x="784" y="289" width="1" height="1" fill="#8cc43a" opacity="0.85"/><rect x="856" y="214" width="1" height="1" fill="#cfc51a" opacity="0.85"/><rect x="837" y="196" width="1" height="1" fill="#b0c428" opacity="0.85"/><rect x="765" y="216" width="1" height="1" fill="#2fa56d" opacity="0.85"/><rect x="787" y="172" width="1" height="1" fill="#8cc43a" opacity="0.85"/><rect x="780" y="237" width="1" height="1" fill="#cfc51a" opacity="0.85"/><rect x="856" y="267" width="1" height="1" fill="#8cc43a" opacity="0.85"/><rect x="774" y="217" width="1" height="1" fill="#b0c428" opacity="0.85"/><rect x="845" y="296" width="1" height="1" fill="#d9c81e" opacity="0.85"/><rect x="783" y="213" width="1" height="1" fill="#2c5d80" opacity="0.85"/><rect x="773" y="298" width="1" height="1" fill="#b0c428" opacity="0.85"/><rect x="764" y="244" width="1" height="1" fill="#8cc43a" opacity="0.85"/><rect x="770" y="170" width="1" height="1" fill="#cfc51a" opacity="0.85"/><rect x="765" y="210" width="1" height="1" fill="#cfc51a" opacity="0.85"/><rect x="854" y="226" width="1" height="1" fill="#8cc43a" opacity="0.85"/><rect x="781" y="179" width="1" height="1" fill="#2c5d80" opacity="0.85"/><rect x="787" y="184" width="1" height="1" fill="#cfc51a" opacity="0.85"/><rect x="828" y="213" width="1" height="1" fill="#d9c81e" opacity="0.85"/><rect x="803" y="172" width="1" height="1" fill="#b0c428" opacity="0.85"/><rect x="786" y="258" width="1" height="1" fill="#8cc43a" opacity="0.85"/><rect x="791" y="182" width="1" height="1" fill="#d9c81e" opacity="0.85"/><rect x="775" y="226" width="1" height="1" fill="#d9c81e" opacity="0.85"/><rect x="790" y="288" width="1" height="1" fill="#d9c81e" opacity="0.85"/><rect x="770" y="216" width="1" height="1" fill="#d9c81e" opacity="0.85"/><rect x="780" y="210" width="1" height="1" fill="#cfc51a" opacity="0.85"/><rect x="772" y="177" width="1" height="1" fill="#b0c428" opacity="0.85"/><rect x="825" y="256" width="1" height="1" fill="#cfc51a" opacity="0.85"/><rect x="819" y="289" width="1" height="1" fill="#b0c428" opacity="0.85"/><rect x="829" y="294" width="1" height="1" fill="#d9c81e" opacity="0.85"/><rect x="809" y="261" width="1" height="1" fill="#d9c81e" opacity="0.85"/><rect x="771" y="235" width="1" height="1" fill="#cfc51a" opacity="0.85"/><rect x="838" y="287" width="1" height="1" fill="#8cc43a" opacity="0.85"/><rect x="848" y="281" width="1" height="1" fill="#d9c81e" opacity="0.85"/><rect x="845" y="239" width="1" height="1" fill="#8cc43a" opacity="0.85"/><rect x="799" y="159" width="1" height="1" fill="#d9c81e" opacity="0.85"/><rect x="824" y="299" width="1" height="1" fill="#1c8e7b" opacity="0.85"/><rect x="800" y="262" width="1" height="1" fill="#8cc43a" opacity="0.85"/><rect x="807" y="234" width="1" height="1" fill="#d9c81e" opacity="0.85"/><rect x="793" y="170" width="1" height="1" fill="#d9c81e" opacity="0.85"/><rect x="810" y="245" width="1" height="1" fill="#1c8e7b" opacity="0.85"/><rect x="848" y="210" width="1" height="1" fill="#cfc51a" opacity="0.85"/><rect x="812" y="265" width="1" height="1" fill="#8cc43a" opacity="0.85"/><rect x="810" y="192" width="1" height="1" fill="#b0c428" opacity="0.85"/><rect x="782" y="219" width="1" height="1" fill="#cfc51a" opacity="0.85"/><rect x="846" y="212" width="1" height="1" fill="#b0c428" opacity="0.85"/><rect x="783" y="177" width="1" height="1" fill="#d9c81e" opacity="0.85"/><rect x="830" y="292" width="1" height="1" fill="#cfc51a" opacity="0.85"/><rect x="774" y="224" width="1" height="1" fill="#22757f" opacity="0.85"/><rect x="799" y="231" width="1" height="1" fill="#8cc43a" opacity="0.85"/><rect x="794" y="275" width="1" height="1" fill="#d9c81e" opacity="0.85"/><rect x="827" y="197" width="1" height="1" fill="#d9c81e" opacity="0.85"/><rect x="824" y="215" width="1" height="1" fill="#b0c428" opacity="0.85"/><rect x="786" y="178" width="1" height="1" fill="#d9c81e" opacity="0.85"/><rect x="805" y="247" width="1" height="1" fill="#b0c428" opacity="0.85"/><rect x="854" y="255" width="1" height="1" fill="#8cc43a" opacity="0.85"/><rect x="788" y="259" width="1" height="1" fill="#d9c81e" opacity="0.85"/><rect x="780" y="196" width="1" height="1" fill="#cfc51a" opacity="0.85"/><rect x="800" y="270" width="1" height="1" fill="#62b850" opacity="0.85"/><rect x="802" y="284" width="1" height="1" fill="#8cc43a" opacity="0.85"/><rect x="806" y="246" width="1" height="1" fill="#22757f" opacity="0.85"/><rect x="815" y="250" width="1" height="1" fill="#b0c428" opacity="0.85"/><rect x="807" y="250" width="1" height="1" fill="#d9c81e" opacity="0.85"/><rect x="784" y="285" width="1" height="1" fill="#1c8e7b" opacity="0.85"/><rect x="814" y="270" width="1" height="1" fill="#d9c81e" opacity="0.85"/><rect x="796" y="169" width="1" height="1" fill="#8cc43a" opacity="0.85"/><rect x="836" y="227" width="1" height="1" fill="#d9c81e" opacity="0.85"/><rect x="804" y="162" width="1" height="1" fill="#cfc51a" opacity="0.85"/><rect x="808" y="299" width="1" height="1" fill="#2c5d80" opacity="0.85"/><rect x="842" y="255" width="1" height="1" fill="#22757f" opacity="0.85"/><rect x="818" y="255" width="1" height="1" fill="#8cc43a" opacity="0.85"/><rect x="813" y="199" width="1" height="1" fill="#cfc51a" opacity="0.85"/><rect x="813" y="277" width="1" height="1" fill="#b0c428" opacity="0.85"/><rect x="827" y="293" width="1" height="1" fill="#2c5d80" opacity="0.85"/><rect x="783" y="278" width="1" height="1" fill="#2c5d80" opacity="0.85"/><rect x="789" y="228" width="1" height="1" fill="#d9c81e" opacity="0.85"/><rect x="811" y="243" width="1" height="1" fill="#d9c81e" opacity="0.85"/><rect x="812" y="214" width="1" height="1" fill="#d9c81e" opacity="0.85"/><rect x="810" y="256" width="1" height="1" fill="#8cc43a" opacity="0.85"/><rect x="802" y="293" width="1" height="1" fill="#1c8e7b" opacity="0.85"/><rect x="787" y="228" width="1" height="1" fill="#8cc43a" opacity="0.85"/><rect x="813" y="173" width="1" height="1" fill="#d9c81e" opacity="0.85"/><rect x="850" y="176" width="1" height="1" fill="#d9c81e" opacity="0.85"/><rect x="767" y="180" width="1" height="1" fill="#b0c428" opacity="0.85"/><rect x="794" y="208" width="1" height="1" fill="#d9c81e" opacity="0.85"/><rect x="810" y="240" width="1" height="1" fill="#2c5d80" opacity="0.85"/><rect x="787" y="186" width="1" height="1" fill="#8cc43a" opacity="0.85"/><rect x="766" y="247" width="1" height="1" fill="#cfc51a" opacity="0.85"/><rect x="814" y="280" width="1" height="1" fill="#cfc51a" opacity="0.85"/><rect x="813" y="278" width="1" height="1" fill="#cfc51a" opacity="0.85"/><rect x="785" y="263" width="1" height="1" fill="#cfc51a" opacity="0.85"/><rect x="793" y="202" width="1" height="1" fill="#2fa56d" opacity="0.85"/><rect x="837" y="185" width="1" height="1" fill="#cfc51a" opacity="0.85"/><rect x="776" y="170" width="1" height="1" fill="#8cc43a" opacity="0.85"/><rect x="842" y="217" width="1" height="1" fill="#cfc51a" opacity="0.85"/><rect x="782" y="247" width="1" height="1" fill="#d9c81e" opacity="0.85"/><rect x="782" y="254" width="1" height="1" fill="#1c8e7b" opacity="0.85"/><rect x="774" y="229" width="1" height="1" fill="#cfc51a" opacity="0.85"/><rect x="839" y="226" width="1" height="1" fill="#8cc43a" opacity="0.85"/><rect x="777" y="184" width="1" height="1" fill="#cfc51a" opacity="0.85"/><rect x="857" y="289" width="1" height="1" fill="#d9c81e" opacity="0.85"/><rect x="776" y="254" width="1" height="1" fill="#d9c81e" opacity="0.85"/><rect x="794" y="224" width="1" height="1" fill="#8cc43a" opacity="0.85"/><rect x="783" y="210" width="1" height="1" fill="#d9c81e" opacity="0.85"/><rect x="843" y="183" width="1" height="1" fill="#b0c428" opacity="0.85"/><rect x="802" y="185" width="1" height="1" fill="#d9c81e" opacity="0.85"/><rect x="794" y="170" width="1" height="1" fill="#8cc43a" opacity="0.85"/><rect x="817" y="185" width="1" height="1" fill="#b0c428" opacity="0.85"/><rect x="904" y="173" width="1" height="1" fill="#d9c81e" opacity="0.85"/><rect x="901" y="207" width="1" height="1" fill="#cfc51a" opacity="0.85"/><rect x="869" y="178" width="1" height="1" fill="#b0c428" opacity="0.85"/><rect x="898" y="206" width="1" height="1" fill="#d9c81e" opacity="0.85"/><rect x="883" y="203" width="1" height="1" fill="#d9c81e" opacity="0.85"/><rect x="904" y="176" width="1" height="1" fill="#d9c81e" opacity="0.85"/><rect x="862" y="180" width="1" height="1" fill="#b0c428" opacity="0.85"/><rect x="909" y="160" width="1" height="1" fill="#cfc51a" opacity="0.85"/><rect x="912" y="200" width="1" height="1" fill="#cfc51a" opacity="0.85"/><rect x="873" y="183" width="1" height="1" fill="#d9c81e" opacity="0.85"/><rect x="890" y="182" width="1" height="1" fill="#cfc51a" opacity="0.85"/><rect x="896" y="202" width="1" height="1" fill="#cfc51a" opacity="0.85"/><rect x="913" y="158" width="1" height="1" fill="#b0c428" opacity="0.85"/><rect x="867" y="172" width="1" height="1" fill="#cfc51a" opacity="0.85"/><rect x="805" y="371" width="1" height="1" fill="#2c5d80" opacity="0.5"/><rect x="827" y="367" width="1" height="1" fill="#22757f" opacity="0.5"/><rect x="787" y="354" width="1" height="1" fill="#62b850" opacity="0.5"/><rect x="816" y="354" width="1" height="1" fill="#41246c" opacity="0.5"/><rect x="811" y="356" width="1" height="1" fill="#cfc51a" opacity="0.5"/><rect x="827" y="335" width="1" height="1" fill="#2c5d80" opacity="0.5"/><rect x="831" y="355" width="1" height="1" fill="#37417b" opacity="0.5"/><rect x="801" y="401" width="1" height="1" fill="#22757f" opacity="0.5"/><rect x="795" y="356" width="1" height="1" fill="#22757f" opacity="0.5"/><rect x="785" y="343" width="1" height="1" fill="#41246c" opacity="0.5"/><rect x="810" y="356" width="1" height="1" fill="#b0c428" opacity="0.5"/><rect x="826" y="362" width="1" height="1" fill="#3d014c" opacity="0.5"/><rect x="806" y="331" width="1" height="1" fill="#cfc51a" opacity="0.5"/><rect x="802" y="356" width="1" height="1" fill="#2c5d80" opacity="0.5"/><rect x="803" y="380" width="1" height="1" fill="#1c8e7b" opacity="0.5"/><rect x="799" y="336" width="1" height="1" fill="#37417b" opacity="0.5"/><rect x="802" y="339" width="1" height="1" fill="#3d014c" opacity="0.5"/><rect x="809" y="343" width="1" height="1" fill="#22757f" opacity="0.5"/><rect x="817" y="323" width="1" height="1" fill="#22757f" opacity="0.5"/><rect x="784" y="334" width="1" height="1" fill="#1c8e7b" opacity="0.5"/><rect x="787" y="327" width="1" height="1" fill="#1c8e7b" opacity="0.5"/><rect x="821" y="410" width="1" height="1" fill="#2fa56d" opacity="0.5"/><rect x="808" y="398" width="1" height="1" fill="#2fa56d" opacity="0.5"/><rect x="813" y="390" width="1" height="1" fill="#41246c" opacity="0.5"/><rect x="819" y="385" width="1" height="1" fill="#8cc43a" opacity="0.5"/><rect x="796" y="368" width="1" height="1" fill="#41246c" opacity="0.5"/><rect x="818" y="334" width="1" height="1" fill="#cfc51a" opacity="0.5"/><rect x="801" y="377" width="1" height="1" fill="#3d014c" opacity="0.5"/><rect x="829" y="364" width="1" height="1" fill="#41246c" opacity="0.5"/><rect x="817" y="348" width="1" height="1" fill="#37417b" opacity="0.5"/><rect x="818" y="372" width="1" height="1" fill="#2c5d80" opacity="0.5"/><rect x="820" y="334" width="1" height="1" fill="#d9c81e" opacity="0.5"/><rect x="823" y="375" width="1" height="1" fill="#2fa56d" opacity="0.5"/><rect x="802" y="331" width="1" height="1" fill="#22757f" opacity="0.5"/><rect x="808" y="382" width="1" height="1" fill="#41246c" opacity="0.5"/><rect x="801" y="396" width="1" height="1" fill="#41246c" opacity="0.5"/><rect x="830" y="348" width="1" height="1" fill="#22757f" opacity="0.5"/><rect x="796" y="371" width="1" height="1" fill="#62b850" opacity="0.5"/><rect x="811" y="395" width="1" height="1" fill="#22757f" opacity="0.5"/><rect x="798" y="329" width="1" height="1" fill="#41246c" opacity="0.5"/><rect x="776" y="344" width="1" height="1" fill="#3d014c" opacity="0.5"/><rect x="799" y="355" width="1" height="1" fill="#2c5d80" opacity="0.5"/><rect x="823" y="348" width="1" height="1" fill="#37417b" opacity="0.5"/><rect x="822" y="372" width="1" height="1" fill="#2fa56d" opacity="0.5"/><rect x="788" y="320" width="1" height="1" fill="#37417b" opacity="0.5"/><rect x="801" y="402" width="1" height="1" fill="#22757f" opacity="0.5"/><rect x="807" y="299" width="1" height="1" fill="#41246c" opacity="0.5"/><rect x="805" y="354" width="1" height="1" fill="#2c5d80" opacity="0.5"/><rect x="811" y="387" width="1" height="1" fill="#37417b" opacity="0.5"/><rect x="798" y="395" width="1" height="1" fill="#3d014c" opacity="0.5"/><rect x="841" y="356" width="1" height="1" fill="#37417b" opacity="0.5"/><rect x="813" y="354" width="1" height="1" fill="#2fa56d" opacity="0.5"/><rect x="790" y="313" width="1" height="1" fill="#3d014c" opacity="0.5"/><rect x="806" y="364" width="1" height="1" fill="#2fa56d" opacity="0.5"/><rect x="818" y="335" width="1" height="1" fill="#1c8e7b" opacity="0.5"/><rect x="811" y="384" width="1" height="1" fill="#41246c" opacity="0.5"/><rect x="818" y="384" width="1" height="1" fill="#22757f" opacity="0.5"/><rect x="806" y="383" width="1" height="1" fill="#d9c81e" opacity="0.5"/><rect x="811" y="360" width="1" height="1" fill="#3d014c" opacity="0.5"/><rect x="820" y="369" width="1" height="1" fill="#1c8e7b" opacity="0.5"/><rect x="786" y="343" width="1" height="1" fill="#37417b" opacity="0.5"/><rect x="813" y="385" width="1" height="1" fill="#1c8e7b" opacity="0.5"/><rect x="852" y="327" width="1" height="1" fill="#3d014c" opacity="0.5"/><rect x="771" y="347" width="1" height="1" fill="#2c5d80" opacity="0.5"/><rect x="827" y="351" width="1" height="1" fill="#2fa56d" opacity="0.5"/><rect x="796" y="368" width="1" height="1" fill="#1c8e7b" opacity="0.5"/><rect x="817" y="337" width="1" height="1" fill="#37417b" opacity="0.5"/><rect x="816" y="312" width="1" height="1" fill="#1c8e7b" opacity="0.5"/><rect x="844" y="326" width="1" height="1" fill="#8cc43a" opacity="0.5"/><rect x="820" y="319" width="1" height="1" fill="#1c8e7b" opacity="0.5"/><rect x="815" y="350" width="1" height="1" fill="#37417b" opacity="0.5"/><rect x="808" y="404" width="1" height="1" fill="#3d014c" opacity="0.5"/><rect x="817" y="384" width="1" height="1" fill="#cfc51a" opacity="0.5"/><rect x="814" y="354" width="1" height="1" fill="#41246c" opacity="0.5"/><rect x="807" y="353" width="1" height="1" fill="#37417b" opacity="0.5"/><rect x="822" y="345" width="1" height="1" fill="#2c5d80" opacity="0.5"/><rect x="822" y="409" width="1" height="1" fill="#2c5d80" opacity="0.5"/><rect x="817" y="403" width="1" height="1" fill="#1c8e7b" opacity="0.5"/><rect x="802" y="394" width="1" height="1" fill="#2c5d80" opacity="0.5"/><rect x="807" y="355" width="1" height="1" fill="#1c8e7b" opacity="0.5"/><rect x="825" y="326" width="1" height="1" fill="#2c5d80" opacity="0.5"/><rect x="805" y="331" width="1" height="1" fill="#2fa56d" opacity="0.5"/><rect x="808" y="367" width="1" height="1" fill="#cfc51a" opacity="0.5"/><rect x="820" y="355" width="1" height="1" fill="#37417b" opacity="0.5"/><rect x="811" y="326" width="1" height="1" fill="#1c8e7b" opacity="0.5"/><rect x="821" y="413" width="1" height="1" fill="#22757f" opacity="0.5"/><rect x="779" y="346" width="1" height="1" fill="#3d014c" opacity="0.5"/><rect x="803" y="375" width="1" height="1" fill="#1c8e7b" opacity="0.5"/><rect x="796" y="322" width="1" height="1" fill="#2c5d80" opacity="0.5"/><rect x="808" y="352" width="1" height="1" fill="#2fa56d" opacity="0.5"/><rect x="821" y="358" width="1" height="1" fill="#1c8e7b" opacity="0.5"/><rect x="819" y="338" width="1" height="1" fill="#2c5d80" opacity="0.5"/><rect x="786" y="331" width="1" height="1" fill="#22757f" opacity="0.5"/><rect x="795" y="330" width="1" height="1" fill="#22757f" opacity="0.5"/><rect x="817" y="390" width="1" height="1" fill="#37417b" opacity="0.5"/><rect x="820" y="309" width="1" height="1" fill="#1c8e7b" opacity="0.5"/><rect x="810" y="404" width="1" height="1" fill="#1c8e7b" opacity="0.5"/><rect x="796" y="395" width="1" height="1" fill="#41246c" opacity="0.5"/><rect x="836" y="350" width="1" height="1" fill="#41246c" opacity="0.5"/><rect x="813" y="378" width="1" height="1" fill="#37417b" opacity="0.5"/><rect x="794" y="379" width="1" height="1" fill="#3d014c" opacity="0.5"/><rect x="795" y="392" width="1" height="1" fill="#41246c" opacity="0.5"/><rect x="785" y="355" width="1" height="1" fill="#22757f" opacity="0.5"/><rect x="826" y="349" width="1" height="1" fill="#3d014c" opacity="0.5"/><rect x="802" y="380" width="1" height="1" fill="#3d014c" opacity="0.5"/><rect x="815" y="369" width="1" height="1" fill="#41246c" opacity="0.5"/><rect x="837" y="310" width="1" height="1" fill="#41246c" opacity="0.5"/><rect x="812" y="360" width="1" height="1" fill="#2c5d80" opacity="0.5"/><rect x="805" y="380" width="1" height="1" fill="#22757f" opacity="0.5"/><rect x="804" y="312" width="1" height="1" fill="#2c5d80" opacity="0.5"/><rect x="791" y="345" width="1" height="1" fill="#37417b" opacity="0.5"/><rect x="834" y="345" width="1" height="1" fill="#22757f" opacity="0.5"/><rect x="832" y="314" width="1" height="1" fill="#2c5d80" opacity="0.5"/><rect x="818" y="376" width="1" height="1" fill="#b0c428" opacity="0.5"/><rect x="788" y="360" width="1" height="1" fill="#b0c428" opacity="0.5"/><rect x="825" y="351" width="1" height="1" fill="#2c5d80" opacity="0.5"/><rect x="807" y="324" width="1" height="1" fill="#22757f" opacity="0.5"/><rect x="842" y="323" width="1" height="1" fill="#3d014c" opacity="0.5"/><rect x="805" y="372" width="1" height="1" fill="#37417b" opacity="0.5"/><rect x="833" y="345" width="1" height="1" fill="#1c8e7b" opacity="0.5"/><rect x="805" y="303" width="1" height="1" fill="#37417b" opacity="0.5"/><rect x="817" y="416" width="1" height="1" fill="#2fa56d" opacity="0.5"/><rect x="811" y="365" width="1" height="1" fill="#22757f" opacity="0.5"/><rect x="823" y="368" width="1" height="1" fill="#2c5d80" opacity="0.5"/><rect x="819" y="337" width="1" height="1" fill="#37417b" opacity="0.5"/><rect x="813" y="392" width="1" height="1" fill="#22757f" opacity="0.5"/><rect x="802" y="400" width="1" height="1" fill="#8cc43a" opacity="0.5"/><rect x="821" y="351" width="1" height="1" fill="#d9c81e" opacity="0.5"/><rect x="796" y="393" width="1" height="1" fill="#41246c" opacity="0.5"/><rect x="825" y="365" width="1" height="1" fill="#1c8e7b" opacity="0.5"/><rect x="800" y="344" width="1" height="1" fill="#22757f" opacity="0.5"/><rect x="833" y="330" width="1" height="1" fill="#41246c" opacity="0.5"/><rect x="846" y="351" width="1" height="1" fill="#1c8e7b" opacity="0.5"/><rect x="814" y="392" width="1" height="1" fill="#1c8e7b" opacity="0.5"/><rect x="807" y="415" width="1" height="1" fill="#22757f" opacity="0.5"/><rect x="816" y="337" width="1" height="1" fill="#2fa56d" opacity="0.5"/><rect x="798" y="354" width="1" height="1" fill="#1c8e7b" opacity="0.5"/><rect x="802" y="344" width="1" height="1" fill="#2fa56d" opacity="0.5"/><rect x="802" y="368" width="1" height="1" fill="#d9c81e" opacity="0.5"/><rect x="804" y="364" width="1" height="1" fill="#22757f" opacity="0.5"/><rect x="789" y="358" width="1" height="1" fill="#1c8e7b" opacity="0.5"/><rect x="803" y="416" width="1" height="1" fill="#22757f" opacity="0.5"/><rect x="810" y="358" width="1" height="1" fill="#1c8e7b" opacity="0.5"/><rect x="816" y="365" width="1" height="1" fill="#3d014c" opacity="0.5"/><rect x="809" y="364" width="1" height="1" fill="#d9c81e" opacity="0.5"/><rect x="822" y="401" width="1" height="1" fill="#22757f" opacity="0.5"/><rect x="800" y="398" width="1" height="1" fill="#22757f" opacity="0.5"/><rect x="800" y="331" width="1" height="1" fill="#cfc51a" opacity="0.5"/><rect x="781" y="336" width="1" height="1" fill="#2c5d80" opacity="0.5"/><rect x="813" y="399" width="1" height="1" fill="#3d014c" opacity="0.5"/><rect x="803" y="317" width="1" height="1" fill="#37417b" opacity="0.5"/><rect x="815" y="406" width="1" height="1" fill="#2fa56d" opacity="0.5"/><rect x="824" y="347" width="1" height="1" fill="#37417b" opacity="0.5"/><rect x="788" y="366" width="1" height="1" fill="#22757f" opacity="0.5"/><rect x="814" y="359" width="1" height="1" fill="#1c8e7b" opacity="0.5"/><rect x="787" y="349" width="1" height="1" fill="#1c8e7b" opacity="0.5"/><rect x="805" y="358" width="1" height="1" fill="#41246c" opacity="0.5"/><rect x="799" y="405" width="1" height="1" fill="#22757f" opacity="0.5"/><rect x="813" y="329" width="1" height="1" fill="#37417b" opacity="0.5"/><rect x="818" y="386" width="1" height="1" fill="#41246c" opacity="0.5"/><rect x="795" y="330" width="1" height="1" fill="#22757f" opacity="0.5"/><rect x="794" y="381" width="1" height="1" fill="#2fa56d" opacity="0.5"/><rect x="801" y="356" width="1" height="1" fill="#37417b" opacity="0.5"/><rect x="810" y="357" width="1" height="1" fill="#37417b" opacity="0.5"/><rect x="804" y="397" width="1" height="1" fill="#2fa56d" opacity="0.5"/><rect x="796" y="321" width="1" height="1" fill="#62b850" opacity="0.5"/><rect x="813" y="389" width="1" height="1" fill="#1c8e7b" opacity="0.5"/><rect x="803" y="372" width="1" height="1" fill="#22757f" opacity="0.5"/><rect x="806" y="360" width="1" height="1" fill="#41246c" opacity="0.5"/><rect x="768" y="337" width="1" height="1" fill="#cfc51a" opacity="0.5"/><rect x="790" y="373" width="1" height="1" fill="#8cc43a" opacity="0.5"/><rect x="806" y="372" width="1" height="1" fill="#1c8e7b" opacity="0.5"/><rect x="821" y="401" width="1" height="1" fill="#1c8e7b" opacity="0.5"/><rect x="812" y="330" width="1" height="1" fill="#41246c" opacity="0.5"/><rect x="792" y="310" width="1" height="1" fill="#2c5d80" opacity="0.5"/><rect x="805" y="370" width="1" height="1" fill="#22757f" opacity="0.5"/><rect x="792" y="340" width="1" height="1" fill="#37417b" opacity="0.5"/><rect x="807" y="342" width="1" height="1" fill="#1c8e7b" opacity="0.5"/><rect x="806" y="312" width="1" height="1" fill="#1c8e7b" opacity="0.5"/><rect x="803" y="299" width="1" height="1" fill="#22757f" opacity="0.5"/><rect x="823" y="337" width="1" height="1" fill="#8cc43a" opacity="0.5"/><rect x="803" y="364" width="1" height="1" fill="#1c8e7b" opacity="0.5"/><rect x="797" y="367" width="1" height="1" fill="#1c8e7b" opacity="0.5"/><rect x="828" y="371" width="1" height="1" fill="#37417b" opacity="0.5"/><rect x="802" y="330" width="1" height="1" fill="#22757f" opacity="0.5"/><rect x="806" y="320" width="1" height="1" fill="#1c8e7b" opacity="0.5"/><rect x="824" y="332" width="1" height="1" fill="#1c8e7b" opacity="0.5"/><rect x="813" y="391" width="1" height="1" fill="#1c8e7b" opacity="0.5"/><rect x="810" y="330" width="1" height="1" fill="#3d014c" opacity="0.5"/><rect x="828" y="362" width="1" height="1" fill="#3d014c" opacity="0.5"/><rect x="817" y="412" width="1" height="1" fill="#3d014c" opacity="0.5"/><rect x="821" y="349" width="1" height="1" fill="#2fa56d" opacity="0.5"/><rect x="814" y="351" width="1" height="1" fill="#2c5d80" opacity="0.5"/><rect x="797" y="384" width="1" height="1" fill="#22757f" opacity="0.5"/><rect x="821" y="416" width="1" height="1" fill="#41246c" opacity="0.5"/><rect x="811" y="379" width="1" height="1" fill="#2c5d80" opacity="0.5"/><rect x="819" y="332" width="1" height="1" fill="#3d014c" opacity="0.5"/><rect x="780" y="350" width="1" height="1" fill="#2c5d80" opacity="0.5"/><rect x="825" y="353" width="1" height="1" fill="#3d014c" opacity="0.5"/><rect x="790" y="348" width="1" height="1" fill="#22757f" opacity="0.5"/><rect x="816" y="369" width="1" height="1" fill="#22757f" opacity="0.5"/><rect x="796" y="356" width="1" height="1" fill="#1c8e7b" opacity="0.5"/><rect x="798" y="342" width="1" height="1" fill="#22757f" opacity="0.5"/><rect x="812" y="378" width="1" height="1" fill="#37417b" opacity="0.5"/><rect x="804" y="423" width="1" height="1" fill="#8cc43a" opacity="0.5"/><rect x="831" y="359" width="1" height="1" fill="#41246c" opacity="0.5"/><rect x="792" y="364" width="1" height="1" fill="#2fa56d" opacity="0.5"/><rect x="819" y="382" width="1" height="1" fill="#41246c" opacity="0.5"/><rect x="815" y="402" width="1" height="1" fill="#8cc43a" opacity="0.5"/><rect x="837" y="366" width="1" height="1" fill="#62b850" opacity="0.5"/><rect x="835" y="334" width="1" height="1" fill="#22757f" opacity="0.5"/><rect x="798" y="411" width="1" height="1" fill="#41246c" opacity="0.5"/><rect x="818" y="382" width="1" height="1" fill="#22757f" opacity="0.5"/><rect x="793" y="341" width="1" height="1" fill="#22757f" opacity="0.5"/><rect x="793" y="381" width="1" height="1" fill="#2c5d80" opacity="0.5"/><rect x="812" y="389" width="1" height="1" fill="#1c8e7b" opacity="0.5"/><rect x="840" y="340" width="1" height="1" fill="#d9c81e" opacity="0.5"/><rect x="829" y="307" width="1" height="1" fill="#3d014c" opacity="0.5"/><rect x="798" y="368" width="1" height="1" fill="#8cc43a" opacity="0.5"/><rect x="826" y="373" width="1" height="1" fill="#3d014c" opacity="0.5"/><rect x="805" y="343" width="1" height="1" fill="#22757f" opacity="0.5"/><rect x="807" y="339" width="1" height="1" fill="#3d014c" opacity="0.5"/><rect x="818" y="404" width="1" height="1" fill="#2c5d80" opacity="0.5"/><rect x="804" y="353" width="1" height="1" fill="#22757f" opacity="0.5"/><rect x="814" y="350" width="1" height="1" fill="#41246c" opacity="0.5"/><rect x="803" y="409" width="1" height="1" fill="#8cc43a" opacity="0.5"/><rect x="768" y="328" width="1" height="1" fill="#cfc51a" opacity="0.5"/><rect x="809" y="390" width="1" height="1" fill="#41246c" opacity="0.5"/><rect x="817" y="365" width="1" height="1" fill="#2fa56d" opacity="0.5"/><rect x="820" y="351" width="1" height="1" fill="#37417b" opacity="0.5"/><rect x="821" y="365" width="1" height="1" fill="#2fa56d" opacity="0.5"/><rect x="831" y="313" width="1" height="1" fill="#2fa56d" opacity="0.5"/><rect x="797" y="417" width="1" height="1" fill="#b0c428" opacity="0.5"/><rect x="816" y="414" width="1" height="1" fill="#1c8e7b" opacity="0.5"/><rect x="831" y="362" width="1" height="1" fill="#37417b" opacity="0.5"/><rect x="802" y="426" width="1" height="1" fill="#3d014c" opacity="0.5"/><rect x="810" y="401" width="1" height="1" fill="#22757f" opacity="0.5"/><rect x="823" y="349" width="1" height="1" fill="#22757f" opacity="0.5"/><rect x="799" y="348" width="1" height="1" fill="#2c5d80" opacity="0.5"/><rect x="819" y="403" width="1" height="1" fill="#1c8e7b" opacity="0.5"/><rect x="807" y="377" width="1" height="1" fill="#2c5d80" opacity="0.5"/><rect x="832" y="364" width="1" height="1" fill="#22757f" opacity="0.5"/><rect x="818" y="336" width="1" height="1" fill="#37417b" opacity="0.5"/><rect x="781" y="327" width="1" height="1" fill="#1c8e7b" opacity="0.5"/><rect x="849" y="342" width="1" height="1" fill="#8cc43a" opacity="0.5"/><rect x="765" y="334" width="1" height="1" fill="#3d014c" opacity="0.5"/><rect x="823" y="369" width="1" height="1" fill="#2fa56d" opacity="0.5"/><rect x="810" y="372" width="1" height="1" fill="#2fa56d" opacity="0.5"/><rect x="807" y="365" width="1" height="1" fill="#22757f" opacity="0.5"/><rect x="824" y="314" width="1" height="1" fill="#2c5d80" opacity="0.5"/><rect x="801" y="401" width="1" height="1" fill="#3d014c" opacity="0.5"/><rect x="820" y="364" width="1" height="1" fill="#8cc43a" opacity="0.5"/><rect x="822" y="339" width="1" height="1" fill="#62b850" opacity="0.5"/><rect x="813" y="396" width="1" height="1" fill="#41246c" opacity="0.5"/><rect x="794" y="341" width="1" height="1" fill="#2fa56d" opacity="0.5"/><rect x="826" y="350" width="1" height="1" fill="#22757f" opacity="0.5"/><rect x="813" y="385" width="1" height="1" fill="#1c8e7b" opacity="0.5"/><rect x="780" y="352" width="1" height="1" fill="#2fa56d" opacity="0.5"/><rect x="822" y="390" width="1" height="1" fill="#2fa56d" opacity="0.5"/><rect x="835" y="368" width="1" height="1" fill="#22757f" opacity="0.5"/><rect x="849" y="347" width="1" height="1" fill="#2fa56d" opacity="0.5"/><rect x="824" y="347" width="1" height="1" fill="#2fa56d" opacity="0.5"/><rect x="794" y="353" width="1" height="1" fill="#1c8e7b" opacity="0.5"/><rect x="840" y="329" width="1" height="1" fill="#2c5d80" opacity="0.5"/><rect x="828" y="357" width="1" height="1" fill="#22757f" opacity="0.5"/><rect x="808" y="365" width="1" height="1" fill="#41246c" opacity="0.5"/><rect x="817" y="407" width="1" height="1" fill="#8cc43a" opacity="0.5"/><rect x="783" y="364" width="1" height="1" fill="#3d014c" opacity="0.5"/><rect x="808" y="314" width="1" height="1" fill="#2c5d80" opacity="0.5"/><rect x="792" y="380" width="1" height="1" fill="#37417b" opacity="0.5"/><rect x="805" y="363" width="1" height="1" fill="#62b850" opacity="0.5"/><rect x="795" y="341" width="1" height="1" fill="#37417b" opacity="0.5"/><rect x="828" y="375" width="1" height="1" fill="#22757f" opacity="0.5"/><rect x="797" y="412" width="1" height="1" fill="#8cc43a" opacity="0.5"/><rect x="811" y="299" width="1" height="1" fill="#1c8e7b" opacity="0.5"/><rect x="827" y="328" width="1" height="1" fill="#d9c81e" opacity="0.5"/><rect x="818" y="330" width="1" height="1" fill="#d9c81e" opacity="0.5"/><rect x="813" y="373" width="1" height="1" fill="#37417b" opacity="0.5"/><rect x="819" y="334" width="1" height="1" fill="#3d014c" opacity="0.5"/><rect x="826" y="360" width="1" height="1" fill="#2c5d80" opacity="0.5"/><rect x="816" y="330" width="1" height="1" fill="#3d014c" opacity="0.5"/><rect x="803" y="366" width="1" height="1" fill="#d9c81e" opacity="0.5"/><rect x="814" y="348" width="1" height="1" fill="#2fa56d" opacity="0.5"/><rect x="825" y="359" width="1" height="1" fill="#2c5d80" opacity="0.5"/><rect x="819" y="393" width="1" height="1" fill="#62b850" opacity="0.5"/><rect x="787" y="373" width="1" height="1" fill="#41246c" opacity="0.5"/><rect x="818" y="408" width="1" height="1" fill="#cfc51a" opacity="0.5"/><rect x="798" y="309" width="1" height="1" fill="#62b850" opacity="0.5"/><rect x="814" y="386" width="1" height="1" fill="#1c8e7b" opacity="0.5"/><rect x="802" y="333" width="1" height="1" fill="#2fa56d" opacity="0.5"/><rect x="809" y="394" width="1" height="1" fill="#22757f" opacity="0.5"/><rect x="798" y="318" width="1" height="1" fill="#22757f" opacity="0.5"/><rect x="812" y="345" width="1" height="1" fill="#22757f" opacity="0.5"/><rect x="813" y="406" width="1" height="1" fill="#3d014c" opacity="0.5"/><rect x="848" y="312" width="1" height="1" fill="#41246c" opacity="0.5"/><rect x="792" y="345" width="1" height="1" fill="#2c5d80" opacity="0.5"/><rect x="797" y="401" width="1" height="1" fill="#22757f" opacity="0.5"/><rect x="802" y="412" width="1" height="1" fill="#1c8e7b" opacity="0.5"/><rect x="831" y="368" width="1" height="1" fill="#3d014c" opacity="0.5"/><rect x="810" y="398" width="1" height="1" fill="#3d014c" opacity="0.5"/><rect x="837" y="329" width="1" height="1" fill="#41246c" opacity="0.5"/><rect x="801" y="341" width="1" height="1" fill="#d9c81e" opacity="0.5"/><rect x="804" y="350" width="1" height="1" fill="#1c8e7b" opacity="0.5"/><rect x="793" y="371" width="1" height="1" fill="#37417b" opacity="0.5"/><rect x="824" y="374" width="1" height="1" fill="#3d014c" opacity="0.5"/><rect x="791" y="327" width="1" height="1" fill="#d9c81e" opacity="0.5"/><rect x="823" y="296" width="1" height="1" fill="#37417b" opacity="0.5"/><rect x="816" y="394" width="1" height="1" fill="#2c5d80" opacity="0.5"/><rect x="798" y="314" width="1" height="1" fill="#8cc43a" opacity="0.5"/><rect x="812" y="350" width="1" height="1" fill="#2fa56d" opacity="0.5"/><rect x="797" y="387" width="1" height="1" fill="#d9c81e" opacity="0.5"/><rect x="812" y="352" width="1" height="1" fill="#62b850" opacity="0.5"/><rect x="817" y="375" width="1" height="1" fill="#22757f" opacity="0.5"/><rect x="801" y="384" width="1" height="1" fill="#2c5d80" opacity="0.5"/><rect x="824" y="373" width="1" height="1" fill="#37417b" opacity="0.5"/><rect x="820" y="376" width="1" height="1" fill="#62b850" opacity="0.5"/><rect x="789" y="361" width="1" height="1" fill="#3d014c" opacity="0.5"/><rect x="808" y="350" width="1" height="1" fill="#cfc51a" opacity="0.5"/><rect x="807" y="317" width="1" height="1" fill="#37417b" opacity="0.5"/><rect x="795" y="344" width="1" height="1" fill="#37417b" opacity="0.5"/><rect x="785" y="318" width="1" height="1" fill="#2c5d80" opacity="0.5"/><rect x="806" y="386" width="1" height="1" fill="#41246c" opacity="0.5"/><rect x="827" y="352" width="1" height="1" fill="#41246c" opacity="0.5"/><rect x="837" y="364" width="1" height="1" fill="#37417b" opacity="0.5"/><rect x="819" y="359" width="1" height="1" fill="#22757f" opacity="0.5"/><rect x="809" y="342" width="1" height="1" fill="#2c5d80" opacity="0.5"/><rect x="816" y="336" width="1" height="1" fill="#22757f" opacity="0.5"/><rect x="804" y="369" width="1" height="1" fill="#d9c81e" opacity="0.5"/><rect x="821" y="392" width="1" height="1" fill="#3d014c" opacity="0.5"/><rect x="812" y="379" width="1" height="1" fill="#22757f" opacity="0.5"/><text x="988.300" y="93.900" font-size="23.800" fill="#111" textLength="60" lengthAdjust="spacingAndGlyphs">1.47 s</text><rect x="988" y="91" width="5.300" height="3.600" fill="#fafafa"/><rect x="995.900" y="91" width="4" height="3.600" fill="#fafafa"/><rect x="1010" y="146" width="12.300" height="248" fill="url(#vir)"/><text x="1009" y="144" font-size="7.600" font-weight="bold" fill="#111" textLength="30.500" lengthAdjust="spacingAndGlyphs">Velocity</text><text x="1025" y="146.5" font-size="7.400" font-weight="bold" fill="#111">2.00</text><text x="1025" y="174.1" font-size="7.400" font-weight="bold" fill="#111">1.78</text><text x="1025" y="201.7" font-size="7.400" font-weight="bold" fill="#111">1.56</text><text x="1025" y="229.3" font-size="7.400" font-weight="bold" fill="#111">1.33</text><text x="1025" y="256.9" font-size="7.400" font-weight="bold" fill="#111">1.11</text><text x="1025" y="284.5" font-size="7.400" font-weight="bold" fill="#111">0.889</text><text x="1025" y="312.1" font-size="7.400" font-weight="bold" fill="#111">0.667</text><text x="1025" y="339.7" font-size="7.400" font-weight="bold" fill="#111">0.444</text><text x="1025" y="367.3" font-size="7.400" font-weight="bold" fill="#111">0.222</text><text x="1025" y="394.9" font-size="7.400" font-weight="bold" fill="#111">0.00</text><path d="M670.500 419.800 V400.500" stroke="#00ee00" stroke-width="1.300"/><path d="M670.500 419.200 L684.500 418.300" stroke="#ee0000" stroke-width="1.300"/><path d="M670.500 420 L680.500 424.700" stroke="#0000dd" stroke-width="1.500"/>
<path d="M678 423 L681.800 425.600 L678.500 425.400Z" fill="#000088" stroke="#000088" stroke-width="0.800"/>
<text x="674" y="398" font-size="10.500" font-weight="bold" fill="#00e800">Y</text>
<text x="688" y="413" font-size="10.500" font-weight="bold" fill="#f01010">X</text>
<text x="682.300" y="418.800" font-size="10.500" font-weight="bold" font-style="italic" fill="#1010e8">Z</text></svg></div><svg style="left:829px;top:460px" width="20" height="4"><g fill="#b0b0b0"><rect x="0" y="1" width="1" height="1"/><rect x="3" y="1" width="1" height="1"/><rect x="6" y="1" width="1" height="1"/><rect x="9" y="1" width="1" height="1"/><rect x="12" y="1" width="1" height="1"/><rect x="15" y="1" width="1" height="1"/></g></svg><div class="a" style="left:626px;top:464px;width:427px;height:348px;box-sizing:border-box;border:1px solid #b8b5b0;background:#fff;overflow:hidden;"></div><div class="a" style="left:627px;top:465px;width:412px;height:346px;overflow:hidden;"><div class="a" style="left:-627px;top:-465px;"><div class="cl k" style="top:466px;">Running project: /.nfs/home/3/jweber/mfixProjects/pic_cyclone/</div><div class="cl k" style="top:481px;">sim_000093</div><div class="cl b" style="top:496px;">Job submit CMD: qsub .qsubmit_script</div><div class="cl b" style="top:511px;">Job successfully submitted with job id: 1633061</div><div class="cl g" style="top:526px;">Submitting to Queue</div><div class="cl k" style="top:541px;">Running project: /.nfs/home/3/jweber/mfixProjects/pic_cyclone/</div><div class="cl k" style="top:556px;">sim_000094</div><div class="cl b" style="top:571px;">Job submit CMD: qsub .qsubmit_script</div><div class="cl b" style="top:586px;">Job successfully submitted with job id: 1633062</div><div class="cl g" style="top:601px;">Submitting to Queue</div><div class="cl k" style="top:616px;">Running project: /.nfs/home/3/jweber/mfixProjects/pic_cyclone/</div><div class="cl k" style="top:631px;">sim_000095</div><div class="cl b" style="top:646px;">Job submit CMD: qsub .qsubmit_script</div><div class="cl b" style="top:661px;">Job successfully submitted with job id: 1633063</div><div class="cl g" style="top:676px;">Submitting to Queue</div><div class="cl k" style="top:691px;">Running project: /.nfs/home/3/jweber/mfixProjects/pic_cyclone/</div><div class="cl k" style="top:706px;">sim_000096</div><div class="cl b" style="top:721px;">Job submit CMD: qsub .qsubmit_script</div><div class="cl b" style="top:736px;">Job successfully submitted with job id: 1633065</div><div class="cl g" style="top:751px;">Submitting to Queue</div><div class="cl k" style="top:766px;">Running project: /.nfs/home/3/jweber/mfixProjects/pic_cyclone/</div><div class="cl k" style="top:781px;">sim_000097</div><div class="cl b" style="top:796px;">Job submit CMD: qsub .qsubmit_script</div></div></div><div class="a" style="left:1039px;top:465px;width:13px;height:346px;background:#d5d3d0;"></div>
<div class="a" style="left:1039px;top:465px;width:13px;height:14px;background:#f3f2f1;"></div>
<div class="a" style="left:1039px;top:798px;width:13px;height:13px;background:#f3f2f1;border-top:1px solid #cfccc8;box-sizing:border-box;"></div>
<div class="a" style="left:1039px;top:758px;width:13px;height:27px;background:#f3f2f1;box-sizing:border-box;border:1px solid #c9c6c2;border-radius:2px;"></div>
<svg style="left:1039px;top:465px" width="13" height="346"><path d="M2.500 9.500 L6.500 5 L10.500 9.500Z M2.500 336.500 L6.500 341 L10.500 336.500Z" fill="#555"/></svg>
</div></body></html>
